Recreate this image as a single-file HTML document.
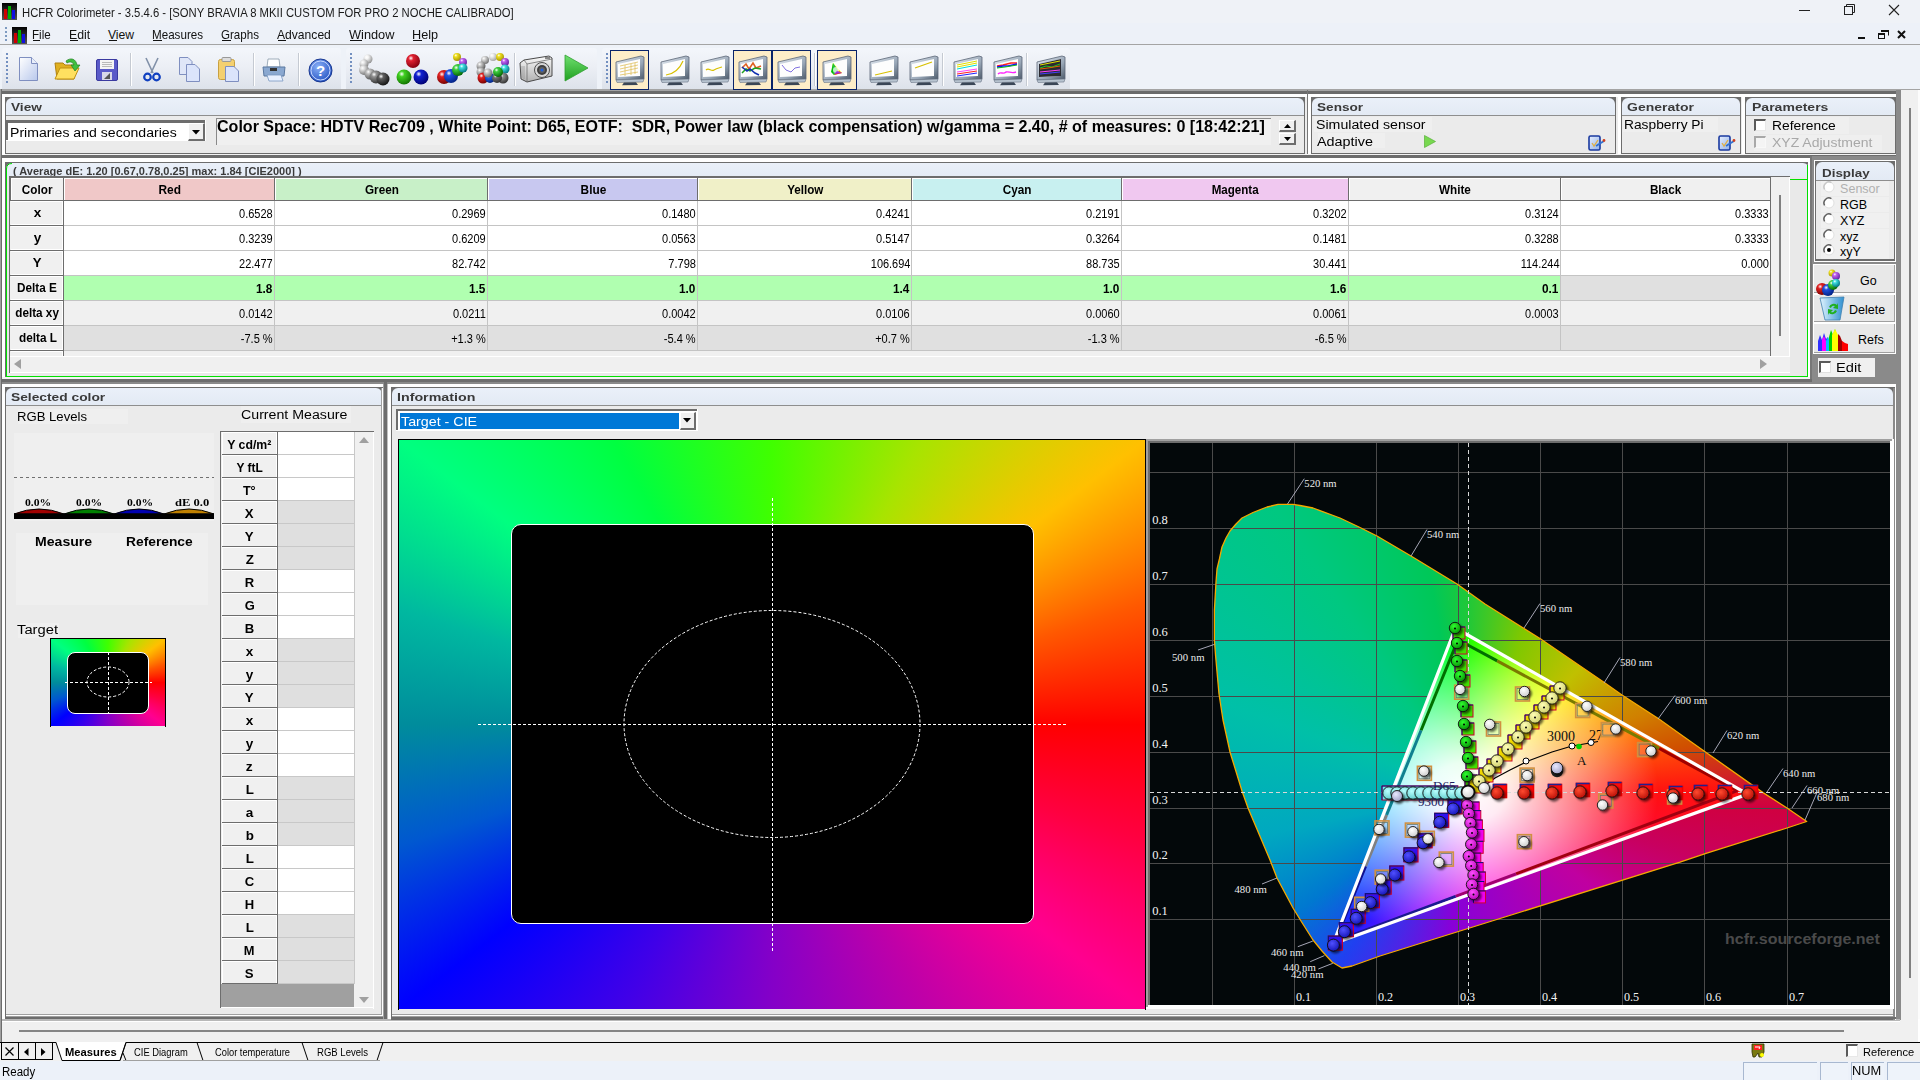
<!DOCTYPE html><html><head><meta charset="utf-8"><style>
*{margin:0;padding:0;box-sizing:border-box}
html,body{width:1920px;height:1080px;overflow:hidden;background:#f0f0f0;font-family:"Liberation Sans",sans-serif;color:#000}
div{position:absolute}
.t{white-space:pre;line-height:1}
.hdr{font-weight:bold;color:#3c3c3c;font-size:13px}
</style></head><body><div style="left:0px;top:0px;width:1920px;height:23px;background:#eff2f7"></div><svg style="position:absolute;left:2px;top:3px" width="15" height="17" viewBox="0 0 15 17">
<defs><linearGradient id="ibg2" x1="0" y1="0" x2="0" y2="1"><stop offset="0" stop-color="#000"/><stop offset="1" stop-color="#555"/></linearGradient></defs>
<rect x="0" y="0" width="15" height="17" fill="url(#ibg2)"/>
<rect x="2" y="6" width="3" height="10" fill="#d00000"/><rect x="6" y="3" width="3" height="13" fill="#00b000"/><rect x="10" y="7" width="3" height="9" fill="#1010e0"/></svg><div class="t" style="left:22.10px;top:6.77px;font-size:12.2px;color:#1a1a1a;transform:scaleX(0.9249);transform-origin:0 0;">HCFR Colorimeter - 3.5.4.6 - [SONY BRAVIA 8 MKII CUSTOM FOR PRO 2 NOCHE CALIBRADO]</div><svg style="position:absolute;left:1790px;top:0" width="130" height="23"><line x1="9" y1="10.5" x2="20" y2="10.5" stroke="#222" stroke-width="1"/><rect x="54.5" y="6.5" width="8" height="8" fill="none" stroke="#222"/><path d="M56.5 6.5 V4.5 H64.5 V12.5 H62.5" fill="none" stroke="#222"/><path d="M99 5 L109 15 M109 5 L99 15" stroke="#222" stroke-width="1.1"/></svg><div style="left:0px;top:23px;width:1920px;height:22px;background:#edf1f8"></div><div style="left:0px;top:44px;width:1920px;height:1px;background:#a4a4a4"></div><div style="left:5px;top:27px;width:2px;height:14px;background:repeating-linear-gradient(#7d9ac0 0 2px,transparent 2px 4px)"></div><svg style="position:absolute;left:12px;top:27px" width="15" height="17" viewBox="0 0 15 17">
<defs><linearGradient id="ibg12" x1="0" y1="0" x2="0" y2="1"><stop offset="0" stop-color="#000"/><stop offset="1" stop-color="#555"/></linearGradient></defs>
<rect x="0" y="0" width="15" height="17" fill="url(#ibg12)"/>
<rect x="2" y="6" width="3" height="10" fill="#d00000"/><rect x="6" y="3" width="3" height="13" fill="#00b000"/><rect x="10" y="7" width="3" height="9" fill="#1010e0"/></svg><div class="t" style="left:32.40px;top:29.27px;font-size:12.2px;color:#111;transform:scaleX(0.9512);transform-origin:0 0;">File</div><div style="left:33.3px;top:40px;width:7px;height:1px;background:#111"></div><div class="t" style="left:69.10px;top:29.27px;font-size:12.2px;color:#111;transform:scaleX(1.0084);transform-origin:0 0;">Edit</div><div style="left:70px;top:40px;width:8px;height:1px;background:#111"></div><div class="t" style="left:107.90px;top:29.27px;font-size:12.2px;color:#111;">View</div><div style="left:108.8px;top:40px;width:8px;height:1px;background:#111"></div><div class="t" style="left:152.10px;top:29.27px;font-size:12.2px;color:#111;transform:scaleX(0.9539);transform-origin:0 0;">Measures</div><div style="left:153px;top:40px;width:9px;height:1px;background:#111"></div><div class="t" style="left:221.30px;top:29.27px;font-size:12.2px;color:#111;transform:scaleX(0.9498);transform-origin:0 0;">Graphs</div><div style="left:222.2px;top:40px;width:9px;height:1px;background:#111"></div><div class="t" style="left:277.00px;top:29.27px;font-size:12.2px;color:#111;transform:scaleX(0.9933);transform-origin:0 0;">Advanced</div><div style="left:277.9px;top:40px;width:8px;height:1px;background:#111"></div><div class="t" style="left:348.80px;top:29.27px;font-size:12.2px;color:#111;transform:scaleX(1.0486);transform-origin:0 0;">Window</div><div style="left:349.7px;top:40px;width:12px;height:1px;background:#111"></div><div class="t" style="left:411.70px;top:29.27px;font-size:12.2px;color:#111;transform:scaleX(1.0402);transform-origin:0 0;">Help</div><div style="left:412.6px;top:40px;width:9px;height:1px;background:#111"></div><svg style="position:absolute;left:1855px;top:26" width="60" height="16"><rect x="3" y="11" width="7" height="2" fill="#111"/><rect x="23.5" y="7.5" width="6" height="5" fill="none" stroke="#111" stroke-width="1"/><rect x="23" y="7" width="7" height="2" fill="#111"/><path d="M26.5 4.5 H33.5 V9.5" fill="none" stroke="#111"/><rect x="26" y="4" width="8" height="2" fill="#111"/><path d="M43 5 L50 12 M50 5 L43 12" stroke="#111" stroke-width="2"/></svg><div style="left:0px;top:45px;width:1920px;height:44px;background:#eef2f8"></div><div style="left:2px;top:48px;width:339px;height:41px;background:linear-gradient(#f3f6fb 0%,#eceff5 45%,#dde2ea 100%);border-radius:3px 3px 0 0"></div><div style="left:6px;top:53px;width:2px;height:32px;background:repeating-linear-gradient(#7390c0 0 2px,transparent 2px 4px)"></div><div style="left:346px;top:48px;width:251px;height:41px;background:linear-gradient(#f3f6fb 0%,#eceff5 45%,#dde2ea 100%);border-radius:3px 3px 0 0"></div><div style="left:350px;top:53px;width:2px;height:32px;background:repeating-linear-gradient(#7390c0 0 2px,transparent 2px 4px)"></div><div style="left:602px;top:48px;width:468px;height:41px;background:linear-gradient(#f3f6fb 0%,#eceff5 45%,#dde2ea 100%);border-radius:3px 3px 0 0"></div><div style="left:606px;top:53px;width:2px;height:32px;background:repeating-linear-gradient(#7390c0 0 2px,transparent 2px 4px)"></div><div style="left:130px;top:53px;width:1px;height:33px;background:#c5cad2;box-shadow:1px 0 0 #fff"></div><div style="left:253px;top:53px;width:1px;height:33px;background:#c5cad2;box-shadow:1px 0 0 #fff"></div><div style="left:298px;top:53px;width:1px;height:33px;background:#c5cad2;box-shadow:1px 0 0 #fff"></div><div style="left:514px;top:53px;width:1px;height:33px;background:#c5cad2;box-shadow:1px 0 0 #fff"></div><div style="left:814px;top:53px;width:1px;height:33px;background:#c5cad2;box-shadow:1px 0 0 #fff"></div><div style="left:942px;top:53px;width:1px;height:33px;background:#c5cad2;box-shadow:1px 0 0 #fff"></div><div style="left:1026px;top:53px;width:1px;height:33px;background:#c5cad2;box-shadow:1px 0 0 #fff"></div><div style="left:0px;top:89px;width:1920px;height:2px;background:#a4a4a4"></div><div style="left:0px;top:91px;width:1920px;height:3px;background:#6b6b6b"></div><div style="left:0px;top:94px;width:1920px;height:3px;background:#fff"></div><svg style="position:absolute;left:19px;top:57px;overflow:visible" width="20" height="24" viewBox="0 0 20 24"><linearGradient id="pg" x1="0" y1="0" x2="1" y2="1"><stop offset="0" stop-color="#fff"/><stop offset="1" stop-color="#b8c8ec"/></linearGradient><path d="M0.5 0.5 H12.5 L18.5 6.5 V23.5 H0.5 Z" fill="url(#pg)" stroke="#7f8fc0"/><path d="M12.5 0.5 V6.5 H18.5" fill="#e8eefa" stroke="#7f8fc0"/></svg><svg style="position:absolute;left:54px;top:57px;overflow:visible" width="26" height="24" viewBox="0 0 26 24"><path d="M1 6 H9 L11 8 H20 V22 H3 Z" fill="#e0b020" stroke="#b08010"/><path d="M1 22 L6 11 H25 L20 22 Z" fill="#ffe060" stroke="#c09010"/><path d="M12 4 C17 0 22 2 23 8 L26 8 L21 14 L17 8 L20 8 C19 5 16 4 13 6 Z" fill="#40c040" stroke="#208020" stroke-width="0.7"/></svg><svg style="position:absolute;left:96px;top:59px;overflow:visible" width="22" height="22" viewBox="0 0 22 22"><rect x="0.5" y="0.5" width="21" height="21" rx="1.5" fill="#5a5ac8" stroke="#3a3aa0"/><rect x="4" y="1" width="14" height="9" fill="#f4f4f4"/><path d="M6 3.5 H16 M6 5.5 H16 M6 7.5 H16" stroke="#aaa" stroke-width="0.8"/><rect x="6" y="13" width="10" height="8" fill="#d8d8e8"/><path d="M8 20 L14 14 L14 20 Z" fill="#555"/></svg><svg style="position:absolute;left:143px;top:58px;overflow:visible" width="18" height="24" viewBox="0 0 18 24"><path d="M3 0 L10 15 M15 0 L8 15" stroke="#8090a8" stroke-width="1.6"/><circle cx="4.5" cy="19" r="3.3" fill="none" stroke="#1040c0" stroke-width="2.2"/><circle cx="13.5" cy="19" r="3.3" fill="none" stroke="#1040c0" stroke-width="2.2"/></svg><svg style="position:absolute;left:179px;top:57px;overflow:visible" width="22" height="25" viewBox="0 0 22 25"><path d="M0.5 0.5 H9 L13 4.5 V17.5 H0.5 Z" fill="#dfe6f8" stroke="#7f8fc0"/><path d="M7.5 7.5 H16 L20.5 12 V24.5 H7.5 Z" fill="#dbe4fb" stroke="#7f8fc0"/></svg><svg style="position:absolute;left:218px;top:57px;overflow:visible" width="22" height="25" viewBox="0 0 22 25"><rect x="0.5" y="2.5" width="16" height="20" rx="2" fill="#f4d070" stroke="#c8a040"/><rect x="4" y="0.5" width="9" height="4" rx="1" fill="#ddd" stroke="#999"/><path d="M7.5 9.5 H16 L20.5 14 V24.5 H7.5 Z" fill="#dbe4fb" stroke="#7f8fc0"/></svg><svg style="position:absolute;left:262px;top:58px;overflow:visible" width="24" height="24" viewBox="0 0 24 24"><path d="M6 1 H17 L18 9 H5 Z" fill="#fff" stroke="#8899aa" stroke-width="0.8"/><path d="M1 9 H23 L22 18 H2 Z" fill="#8aa8d0" stroke="#5a78a0"/><rect x="8" y="10" width="7" height="3" fill="#333"/><path d="M5 17 H19 L21 23 H7 Z" fill="#e8f0ff" stroke="#7898c0" stroke-width="0.8"/></svg><svg style="position:absolute;left:308px;top:58px;overflow:visible" width="25" height="25" viewBox="0 0 25 25"><radialGradient id="hg" cx="0.4" cy="0.35" r="0.7"><stop offset="0" stop-color="#8ab0f8"/><stop offset="1" stop-color="#2050c0"/></radialGradient><circle cx="12.5" cy="12.5" r="11.5" fill="url(#hg)" stroke="#1a3890" stroke-width="1"/><circle cx="12.5" cy="12.5" r="9.5" fill="none" stroke="#c8d8ff" stroke-width="1"/><text x="12.5" y="18" text-anchor="middle" font-family="Liberation Sans" font-weight="bold" font-size="15" fill="#fff">?</text></svg><svg style="position:absolute;left:357px;top:53px;overflow:visible" width="34" height="33" viewBox="0 0 34 33"><radialGradient id="b44865" cx="0.35" cy="0.3" r="0.75"><stop offset="0" stop-color="#fff"/><stop offset="0.25" stop-color="#f4f4f4"/><stop offset="1" stop-color="#909090"/></radialGradient><circle cx="11" cy="6" r="4.5" fill="url(#b44865)"/><radialGradient id="b19548" cx="0.35" cy="0.3" r="0.75"><stop offset="0" stop-color="#fff"/><stop offset="0.25" stop-color="#e8e8e8"/><stop offset="1" stop-color="#808080"/></radialGradient><circle cx="7" cy="11" r="4.5" fill="url(#b19548)"/><radialGradient id="b48007" cx="0.35" cy="0.3" r="0.75"><stop offset="0" stop-color="#fff"/><stop offset="0.25" stop-color="#e0e0e0"/><stop offset="1" stop-color="#707070"/></radialGradient><circle cx="7" cy="17" r="5" fill="url(#b48007)"/><radialGradient id="b12503" cx="0.35" cy="0.3" r="0.75"><stop offset="0" stop-color="#fff"/><stop offset="0.25" stop-color="#c0c0c0"/><stop offset="1" stop-color="#505050"/></radialGradient><circle cx="13" cy="21" r="5.5" fill="url(#b12503)"/><radialGradient id="b9752" cx="0.35" cy="0.3" r="0.75"><stop offset="0" stop-color="#fff"/><stop offset="0.25" stop-color="#909090"/><stop offset="1" stop-color="#303030"/></radialGradient><circle cx="19" cy="24" r="6.5" fill="url(#b9752)"/><radialGradient id="b2339" cx="0.35" cy="0.3" r="0.75"><stop offset="0" stop-color="#fff"/><stop offset="0.25" stop-color="#606060"/><stop offset="1" stop-color="#101010"/></radialGradient><circle cx="26" cy="26" r="6.5" fill="url(#b2339)"/></svg><svg style="position:absolute;left:396px;top:53px;overflow:visible" width="34" height="33" viewBox="0 0 34 33"><radialGradient id="b47967" cx="0.35" cy="0.3" r="0.75"><stop offset="0" stop-color="#fff"/><stop offset="0.25" stop-color="#e02030"/><stop offset="1" stop-color="#800010"/></radialGradient><circle cx="17" cy="8" r="7" fill="url(#b47967)"/><radialGradient id="b72620" cx="0.35" cy="0.3" r="0.75"><stop offset="0" stop-color="#fff"/><stop offset="0.25" stop-color="#40d020"/><stop offset="1" stop-color="#107000"/></radialGradient><circle cx="8" cy="24" r="7.5" fill="url(#b72620)"/><radialGradient id="b6408" cx="0.35" cy="0.3" r="0.75"><stop offset="0" stop-color="#fff"/><stop offset="0.25" stop-color="#1020d0"/><stop offset="1" stop-color="#000070"/></radialGradient><circle cx="25" cy="24" r="7.5" fill="url(#b6408)"/></svg><svg style="position:absolute;left:436px;top:53px;overflow:visible" width="34" height="33" viewBox="0 0 34 33"><radialGradient id="b19639" cx="0.35" cy="0.3" r="0.75"><stop offset="0" stop-color="#fff"/><stop offset="0.25" stop-color="#f0e020"/><stop offset="1" stop-color="#a09000"/></radialGradient><circle cx="21" cy="4" r="4" fill="url(#b19639)"/><radialGradient id="b74729" cx="0.35" cy="0.3" r="0.75"><stop offset="0" stop-color="#fff"/><stop offset="0.25" stop-color="#c060f0"/><stop offset="1" stop-color="#6020a0"/></radialGradient><circle cx="27" cy="9" r="4" fill="url(#b74729)"/><radialGradient id="b22731" cx="0.35" cy="0.3" r="0.75"><stop offset="0" stop-color="#fff"/><stop offset="0.25" stop-color="#e02020"/><stop offset="1" stop-color="#700000"/></radialGradient><circle cx="8" cy="24" r="7" fill="url(#b22731)"/><radialGradient id="b90231" cx="0.35" cy="0.3" r="0.75"><stop offset="0" stop-color="#fff"/><stop offset="0.25" stop-color="#2050e0"/><stop offset="1" stop-color="#002080"/></radialGradient><circle cx="15" cy="23" r="7" fill="url(#b90231)"/><radialGradient id="b73748" cx="0.35" cy="0.3" r="0.75"><stop offset="0" stop-color="#fff"/><stop offset="0.25" stop-color="#40d040"/><stop offset="1" stop-color="#006000"/></radialGradient><circle cx="22" cy="17" r="6" fill="url(#b73748)"/><radialGradient id="b52418" cx="0.35" cy="0.3" r="0.75"><stop offset="0" stop-color="#fff"/><stop offset="0.25" stop-color="#40e0e0"/><stop offset="1" stop-color="#007080"/></radialGradient><circle cx="27" cy="15" r="4.5" fill="url(#b52418)"/></svg><svg style="position:absolute;left:475px;top:53px;overflow:visible" width="34" height="33" viewBox="0 0 34 33"><radialGradient id="b12993" cx="0.35" cy="0.3" r="0.75"><stop offset="0" stop-color="#fff"/><stop offset="0.25" stop-color="#d8d8d8"/><stop offset="1" stop-color="#707070"/></radialGradient><circle cx="10" cy="7" r="4" fill="url(#b12993)"/><radialGradient id="b6859" cx="0.35" cy="0.3" r="0.75"><stop offset="0" stop-color="#fff"/><stop offset="0.25" stop-color="#f0f0f0"/><stop offset="1" stop-color="#a0a0a0"/></radialGradient><circle cx="18" cy="4" r="4" fill="url(#b6859)"/><radialGradient id="b94197" cx="0.35" cy="0.3" r="0.75"><stop offset="0" stop-color="#fff"/><stop offset="0.25" stop-color="#f0e020"/><stop offset="1" stop-color="#a09000"/></radialGradient><circle cx="25" cy="4" r="4" fill="url(#b94197)"/><radialGradient id="b14159" cx="0.35" cy="0.3" r="0.75"><stop offset="0" stop-color="#fff"/><stop offset="0.25" stop-color="#c060f0"/><stop offset="1" stop-color="#6020a0"/></radialGradient><circle cx="30" cy="9" r="4" fill="url(#b14159)"/><radialGradient id="b94847" cx="0.35" cy="0.3" r="0.75"><stop offset="0" stop-color="#fff"/><stop offset="0.25" stop-color="#c8c8c8"/><stop offset="1" stop-color="#505050"/></radialGradient><circle cx="6" cy="13" r="4.5" fill="url(#b94847)"/><radialGradient id="b3373" cx="0.35" cy="0.3" r="0.75"><stop offset="0" stop-color="#fff"/><stop offset="0.25" stop-color="#c8c8c8"/><stop offset="1" stop-color="#505050"/></radialGradient><circle cx="6" cy="19" r="4.5" fill="url(#b3373)"/><radialGradient id="b78454" cx="0.35" cy="0.3" r="0.75"><stop offset="0" stop-color="#fff"/><stop offset="0.25" stop-color="#40e0e0"/><stop offset="1" stop-color="#007080"/></radialGradient><circle cx="30" cy="16" r="4.5" fill="url(#b78454)"/><radialGradient id="b25588" cx="0.35" cy="0.3" r="0.75"><stop offset="0" stop-color="#fff"/><stop offset="0.25" stop-color="#e02020"/><stop offset="1" stop-color="#700000"/></radialGradient><circle cx="8" cy="25" r="5.5" fill="url(#b25588)"/><radialGradient id="b92629" cx="0.35" cy="0.3" r="0.75"><stop offset="0" stop-color="#fff"/><stop offset="0.25" stop-color="#2060e0"/><stop offset="1" stop-color="#002080"/></radialGradient><circle cx="15" cy="25" r="5" fill="url(#b92629)"/><radialGradient id="b66658" cx="0.35" cy="0.3" r="0.75"><stop offset="0" stop-color="#fff"/><stop offset="0.25" stop-color="#909090"/><stop offset="1" stop-color="#303030"/></radialGradient><circle cx="28" cy="25" r="5.5" fill="url(#b66658)"/><radialGradient id="b1511" cx="0.35" cy="0.3" r="0.75"><stop offset="0" stop-color="#fff"/><stop offset="0.25" stop-color="#707070"/><stop offset="1" stop-color="#303030"/></radialGradient><circle cx="22" cy="25" r="5" fill="url(#b1511)"/><radialGradient id="b39415" cx="0.35" cy="0.3" r="0.75"><stop offset="0" stop-color="#fff"/><stop offset="0.25" stop-color="#d0d0d0"/><stop offset="1" stop-color="#606060"/></radialGradient><circle cx="13" cy="20" r="4.5" fill="url(#b39415)"/><radialGradient id="b7552" cx="0.35" cy="0.3" r="0.75"><stop offset="0" stop-color="#fff"/><stop offset="0.25" stop-color="#40d040"/><stop offset="1" stop-color="#006000"/></radialGradient><circle cx="23" cy="19" r="5" fill="url(#b7552)"/></svg><svg style="position:absolute;left:519px;top:54px;overflow:visible" width="34" height="30" viewBox="0 0 34 30"><linearGradient id="cam" x1="0" y1="0" x2="0" y2="1"><stop offset="0" stop-color="#fafafa"/><stop offset="1" stop-color="#b0b0b0"/></linearGradient><path d="M1 9 L5 6 L30 2 L33 4 L33 22 L8 28 L2 25 Z" fill="url(#cam)" stroke="#4a4a4a" stroke-width="1"/><path d="M5 6 L8 10 L33 5 M8 10 V28" fill="none" stroke="#707070" stroke-width="0.8"/><path d="M3 12 V24 M5 12 V25" stroke="#909090" stroke-width="0.7"/><rect x="26" y="3" width="5" height="2" fill="#888"/><circle cx="23" cy="16" r="7.5" fill="#d8d8d8" stroke="#505050" stroke-width="1"/><circle cx="23" cy="16" r="5" fill="#404040"/><circle cx="23" cy="16" r="3" fill="#606060"/><circle cx="23" cy="16" r="1.5" fill="#2060e0"/></svg><svg style="position:absolute;left:563px;top:54px;overflow:visible" width="26" height="28" viewBox="0 0 26 28"><linearGradient id="pl" x1="0" y1="0" x2="0" y2="1"><stop offset="0" stop-color="#70e070"/><stop offset="1" stop-color="#20a020"/></linearGradient><path d="M2 1 L25 14 L2 27 Z" fill="url(#pl)" stroke="#30a030" stroke-width="0.8"/></svg><div style="left:610px;top:50px;width:39px;height:40px;background:#fdedc8;border:1px solid #0a246a"></div><svg style="position:absolute;left:613px;top:54px;overflow:visible" width="34" height="32" viewBox="0 0 34 32"><linearGradient id="mframe" x1="0" y1="0" x2="1" y2="1"><stop offset="0" stop-color="#e8eef5"/><stop offset="0.6" stop-color="#9aa8b8"/><stop offset="1" stop-color="#4a5868"/></linearGradient><path d="M3 8 L28 2 L31 3 L31 25 L3 26 Z" fill="url(#mframe)" stroke="#5a6676" stroke-width="0.8"/><path d="M5 10 L27 5 L27 22 L5 23 Z" fill="#fdfdfd"/><g stroke="#e0c060" stroke-width="0.8"><path d="M7 12 L25 8 M7 15 L25 11 M7 18 L25 14 M7 21 L25 18 M12 11 V22 M18 10 V21 M22 9 V20"/></g><path d="M3 26 L31 25 L30 28 L4 28.5 Z" fill="#b8c4d0" stroke="#6a7686" stroke-width="0.6"/><path d="M11 28.5 L23 28.3 L25 31 L9 31.2 Z" fill="#3a4656"/></svg><svg style="position:absolute;left:658px;top:54px;overflow:visible" width="34" height="32" viewBox="0 0 34 32"><linearGradient id="mframe" x1="0" y1="0" x2="1" y2="1"><stop offset="0" stop-color="#e8eef5"/><stop offset="0.6" stop-color="#9aa8b8"/><stop offset="1" stop-color="#4a5868"/></linearGradient><path d="M3 8 L28 2 L31 3 L31 25 L3 26 Z" fill="url(#mframe)" stroke="#5a6676" stroke-width="0.8"/><path d="M5 10 L27 5 L27 22 L5 23 Z" fill="#fdfdfd"/><path d="M8 21 C16 20 22 14 25 7" fill="none" stroke="#d8c000" stroke-width="1.2"/><path d="M3 26 L31 25 L30 28 L4 28.5 Z" fill="#b8c4d0" stroke="#6a7686" stroke-width="0.6"/><path d="M11 28.5 L23 28.3 L25 31 L9 31.2 Z" fill="#3a4656"/></svg><svg style="position:absolute;left:698px;top:54px;overflow:visible" width="34" height="32" viewBox="0 0 34 32"><linearGradient id="mframe" x1="0" y1="0" x2="1" y2="1"><stop offset="0" stop-color="#e8eef5"/><stop offset="0.6" stop-color="#9aa8b8"/><stop offset="1" stop-color="#4a5868"/></linearGradient><path d="M3 8 L28 2 L31 3 L31 25 L3 26 Z" fill="url(#mframe)" stroke="#5a6676" stroke-width="0.8"/><path d="M5 10 L27 5 L27 22 L5 23 Z" fill="#fdfdfd"/><path d="M8 16 C11 13 13 18 16 16 C19 14 21 14 24 13" fill="none" stroke="#d8c000" stroke-width="1.2"/><path d="M3 26 L31 25 L30 28 L4 28.5 Z" fill="#b8c4d0" stroke="#6a7686" stroke-width="0.6"/><path d="M11 28.5 L23 28.3 L25 31 L9 31.2 Z" fill="#3a4656"/></svg><div style="left:733px;top:50px;width:39px;height:40px;background:#fdedc8;border:1px solid #0a246a"></div><svg style="position:absolute;left:736px;top:54px;overflow:visible" width="34" height="32" viewBox="0 0 34 32"><linearGradient id="mframe" x1="0" y1="0" x2="1" y2="1"><stop offset="0" stop-color="#e8eef5"/><stop offset="0.6" stop-color="#9aa8b8"/><stop offset="1" stop-color="#4a5868"/></linearGradient><path d="M3 8 L28 2 L31 3 L31 25 L3 26 Z" fill="url(#mframe)" stroke="#5a6676" stroke-width="0.8"/><path d="M5 10 L27 5 L27 22 L5 23 Z" fill="#fdfdfd"/><path d="M6 14 L10 10 L13 15 L17 9 L20 14 L25 12" fill="none" stroke="#e06020" stroke-width="1.5"/><path d="M6 19 L10 15 L14 17 L19 14 L25 15" fill="none" stroke="#20a020" stroke-width="1.5"/><path d="M6 13 L11 17 L14 15 L19 19 L23 21" fill="none" stroke="#1030b0" stroke-width="1.5"/><path d="M3 26 L31 25 L30 28 L4 28.5 Z" fill="#b8c4d0" stroke="#6a7686" stroke-width="0.6"/><path d="M11 28.5 L23 28.3 L25 31 L9 31.2 Z" fill="#3a4656"/></svg><div style="left:772px;top:50px;width:39px;height:40px;background:#fdedc8;border:1px solid #0a246a"></div><svg style="position:absolute;left:775px;top:54px;overflow:visible" width="34" height="32" viewBox="0 0 34 32"><linearGradient id="mframe" x1="0" y1="0" x2="1" y2="1"><stop offset="0" stop-color="#e8eef5"/><stop offset="0.6" stop-color="#9aa8b8"/><stop offset="1" stop-color="#4a5868"/></linearGradient><path d="M3 8 L28 2 L31 3 L31 25 L3 26 Z" fill="url(#mframe)" stroke="#5a6676" stroke-width="0.8"/><path d="M5 10 L27 5 L27 22 L5 23 Z" fill="#fdfdfd"/><path d="M7 11 L11 16 L16 18 L20 14 L25 13" fill="none" stroke="#8070e0" stroke-width="1"/><path d="M3 26 L31 25 L30 28 L4 28.5 Z" fill="#b8c4d0" stroke="#6a7686" stroke-width="0.6"/><path d="M11 28.5 L23 28.3 L25 31 L9 31.2 Z" fill="#3a4656"/></svg><div style="left:817px;top:50px;width:40px;height:40px;background:#fdedc8;border:1px solid #0a246a"></div><svg style="position:absolute;left:820px;top:54px;overflow:visible" width="34" height="32" viewBox="0 0 34 32"><linearGradient id="mframe" x1="0" y1="0" x2="1" y2="1"><stop offset="0" stop-color="#e8eef5"/><stop offset="0.6" stop-color="#9aa8b8"/><stop offset="1" stop-color="#4a5868"/></linearGradient><path d="M3 8 L28 2 L31 3 L31 25 L3 26 Z" fill="url(#mframe)" stroke="#5a6676" stroke-width="0.8"/><path d="M5 10 L27 5 L27 22 L5 23 Z" fill="#fdfdfd"/><path d="M13 9 L22 19 L14 21 C12 17 12 13 13 9 Z" fill="#ffff00"/><path d="M13 9 L14 21 L11 18 Z" fill="#00c000"/><path d="M14 21 L22 19 L17 16 Z" fill="#e02020"/><path d="M13 9 C13 13 12 17 14 21 L18 16 Z" fill="#20c040"/><circle cx="16" cy="16" r="3" fill="#fff" opacity="0.7"/><path d="M14 20 L22 19 L17 17 Z" fill="#a030e0"/><path d="M3 26 L31 25 L30 28 L4 28.5 Z" fill="#b8c4d0" stroke="#6a7686" stroke-width="0.6"/><path d="M11 28.5 L23 28.3 L25 31 L9 31.2 Z" fill="#3a4656"/></svg><svg style="position:absolute;left:867px;top:54px;overflow:visible" width="34" height="32" viewBox="0 0 34 32"><linearGradient id="mframe" x1="0" y1="0" x2="1" y2="1"><stop offset="0" stop-color="#e8eef5"/><stop offset="0.6" stop-color="#9aa8b8"/><stop offset="1" stop-color="#4a5868"/></linearGradient><path d="M3 8 L28 2 L31 3 L31 25 L3 26 Z" fill="url(#mframe)" stroke="#5a6676" stroke-width="0.8"/><path d="M5 10 L27 5 L27 22 L5 23 Z" fill="#fdfdfd"/><path d="M8 21 L25 17" fill="none" stroke="#d8c000" stroke-width="1.2"/><path d="M3 26 L31 25 L30 28 L4 28.5 Z" fill="#b8c4d0" stroke="#6a7686" stroke-width="0.6"/><path d="M11 28.5 L23 28.3 L25 31 L9 31.2 Z" fill="#3a4656"/></svg><svg style="position:absolute;left:907px;top:54px;overflow:visible" width="34" height="32" viewBox="0 0 34 32"><linearGradient id="mframe" x1="0" y1="0" x2="1" y2="1"><stop offset="0" stop-color="#e8eef5"/><stop offset="0.6" stop-color="#9aa8b8"/><stop offset="1" stop-color="#4a5868"/></linearGradient><path d="M3 8 L28 2 L31 3 L31 25 L3 26 Z" fill="url(#mframe)" stroke="#5a6676" stroke-width="0.8"/><path d="M5 10 L27 5 L27 22 L5 23 Z" fill="#fdfdfd"/><path d="M8 14 L25 8" fill="none" stroke="#d8c000" stroke-width="1.2"/><path d="M3 26 L31 25 L30 28 L4 28.5 Z" fill="#b8c4d0" stroke="#6a7686" stroke-width="0.6"/><path d="M11 28.5 L23 28.3 L25 31 L9 31.2 Z" fill="#3a4656"/></svg><svg style="position:absolute;left:951px;top:54px;overflow:visible" width="34" height="32" viewBox="0 0 34 32"><linearGradient id="mframe" x1="0" y1="0" x2="1" y2="1"><stop offset="0" stop-color="#e8eef5"/><stop offset="0.6" stop-color="#9aa8b8"/><stop offset="1" stop-color="#4a5868"/></linearGradient><path d="M3 8 L28 2 L31 3 L31 25 L3 26 Z" fill="url(#mframe)" stroke="#5a6676" stroke-width="0.8"/><path d="M5 10 L27 5 L27 22 L5 23 Z" fill="#fdfdfd"/><path d="M6 11 L26 7 M6 13 L26 9" stroke="#e0e000" stroke-width="1"/><path d="M6 15 L26 11" stroke="#00e0e0" stroke-width="1"/><path d="M6 18 L26 15" stroke="#ff40ff" stroke-width="1"/><path d="M6 20 L26 17" stroke="#ff2020" stroke-width="1"/><path d="M6 22 L26 19" stroke="#2020ff" stroke-width="1"/><path d="M3 26 L31 25 L30 28 L4 28.5 Z" fill="#b8c4d0" stroke="#6a7686" stroke-width="0.6"/><path d="M11 28.5 L23 28.3 L25 31 L9 31.2 Z" fill="#3a4656"/></svg><svg style="position:absolute;left:991px;top:54px;overflow:visible" width="34" height="32" viewBox="0 0 34 32"><linearGradient id="mframe" x1="0" y1="0" x2="1" y2="1"><stop offset="0" stop-color="#e8eef5"/><stop offset="0.6" stop-color="#9aa8b8"/><stop offset="1" stop-color="#4a5868"/></linearGradient><path d="M3 8 L28 2 L31 3 L31 25 L3 26 Z" fill="url(#mframe)" stroke="#5a6676" stroke-width="0.8"/><path d="M5 10 L27 5 L27 22 L5 23 Z" fill="#fdfdfd"/><path d="M6 12 L12 11 L16 10 L20 9 L26 9" stroke="#ff2020" stroke-width="1.6" fill="none"/><path d="M6 13 L12 12 L17 12 L26 10" stroke="#1010ff" stroke-width="1.4" fill="none"/><path d="M6 14 L14 13 L26 11" stroke="#10c010" stroke-width="1.2" fill="none"/><path d="M7 20 C10 17 12 21 15 18 C18 17 20 20 25 18" stroke="#ff20ff" stroke-width="1.4" fill="none"/><path d="M3 26 L31 25 L30 28 L4 28.5 Z" fill="#b8c4d0" stroke="#6a7686" stroke-width="0.6"/><path d="M11 28.5 L23 28.3 L25 31 L9 31.2 Z" fill="#3a4656"/></svg><svg style="position:absolute;left:1034px;top:54px;overflow:visible" width="34" height="32" viewBox="0 0 34 32"><linearGradient id="mframe" x1="0" y1="0" x2="1" y2="1"><stop offset="0" stop-color="#e8eef5"/><stop offset="0.6" stop-color="#9aa8b8"/><stop offset="1" stop-color="#4a5868"/></linearGradient><path d="M3 8 L28 2 L31 3 L31 25 L3 26 Z" fill="url(#mframe)" stroke="#5a6676" stroke-width="0.8"/><path d="M5 10 L27 5 L27 22 L5 23 Z" fill="#fdfdfd"/><path d="M5 10 L27 5 L27 22 L5 23 Z" fill="#2a2a30"/><path d="M6 11 L26 7" stroke="#e0e000" stroke-width="1"/><path d="M6 14 L12 12 L18 13 L26 10" stroke="#20c020" stroke-width="1" fill="none"/><path d="M6 15 L14 14 L26 12" stroke="#e06000" stroke-width="1" fill="none"/><path d="M6 18 L26 16" stroke="#ff40ff" stroke-width="1"/><path d="M6 20 L26 18" stroke="#4040ff" stroke-width="1"/><path d="M3 26 L31 25 L30 28 L4 28.5 Z" fill="#b8c4d0" stroke="#6a7686" stroke-width="0.6"/><path d="M11 28.5 L23 28.3 L25 31 L9 31.2 Z" fill="#3a4656"/></svg><div style="left:0px;top:89px;width:1px;height:990px;background:#a0a0a0"></div><div style="left:1px;top:89px;width:1px;height:990px;background:#6d6d6d"></div><div style="left:2px;top:97px;width:3px;height:923px;background:#fff"></div><div style="left:5px;top:97px;width:1300px;height:57px;background:#6d6d6d"></div><div style="left:6px;top:98px;width:1298px;height:17px;background:linear-gradient(#eaf0f9,#e3eaf4);border-radius:6px 6px 0 0"></div><div style="left:6px;top:115px;width:1298px;height:1px;background:#8e8e8e"></div><div style="left:6px;top:116px;width:1298px;height:37px;background:#ebebeb"></div><div class="t" style="left:11.35px;top:102.29px;font-size:11px;font-weight:bold;color:#3a3a3a;transform:scaleX(1.2405);transform-origin:0 0;">View</div><div style="left:6px;top:120px;width:200px;height:21px;background:#6d6d6d;border-right:1px solid #fff;border-bottom:1px solid #fff"></div><div style="left:8px;top:123px;width:197px;height:17px;background:#fff"></div><div class="t" style="left:10.00px;top:126.92px;font-size:12.5px;color:#000;transform:scaleX(1.1264);transform-origin:0 0;">Primaries and secondaries</div><div style="left:188px;top:123px;width:17px;height:18px;background:#f0f0f0;border-left:1px solid #fff;border-top:1px solid #fff;border-right:2px solid #6d6d6d;border-bottom:2px solid #6d6d6d"></div><svg style="position:absolute;left:192px;top:130px;overflow:visible" width="9" height="5" viewBox="0 0 9 5"><path d="M0 0 L8 0 L4 4.5 Z" fill="#000"/></svg><div style="left:216px;top:118px;width:1055px;height:27px;background:#f0f0f0;border-left:1px solid #8a8a8a;border-top:1px solid #8a8a8a"></div><div class="t" style="left:216.90px;top:119.35px;font-size:16.6px;font-weight:bold;color:#000;transform:scaleX(0.9674);transform-origin:0 0;">Color Space: HDTV Rec709 , White Point: D65, EOTF:  SDR, Power law (black compensation) w/gamma = 2.40, # of measures: 0 [18:42:21]</div><div style="left:1279px;top:120px;width:17px;height:12px;background:#f0f0f0;border-left:1px solid #fff;border-top:1px solid #fff;border-right:2px solid #6d6d6d;border-bottom:2px solid #6d6d6d"></div><div style="left:1279px;top:133px;width:17px;height:12px;background:#f0f0f0;border-left:1px solid #fff;border-top:1px solid #fff;border-right:2px solid #6d6d6d;border-bottom:2px solid #6d6d6d"></div><svg style="position:absolute;left:1284px;top:124px;overflow:visible" width="7" height="4" viewBox="0 0 7 4"><path d="M0 4 L3.5 0 L7 4 Z" fill="#000"/></svg><svg style="position:absolute;left:1284px;top:137px;overflow:visible" width="7" height="4" viewBox="0 0 7 4"><path d="M0 0 L3.5 4 L7 0 Z" fill="#000"/></svg><div style="left:1305px;top:97px;width:2px;height:57px;background:#ececec"></div><div style="left:1307px;top:90px;width:1px;height:66px;background:#777"></div><div style="left:1308px;top:97px;width:3px;height:57px;background:#fff"></div><div style="left:1311px;top:97px;width:305px;height:57px;background:#6d6d6d"></div><div style="left:1312px;top:98px;width:303px;height:17px;background:linear-gradient(#eaf0f9,#e3eaf4);border-radius:6px 6px 0 0"></div><div style="left:1312px;top:115px;width:303px;height:1px;background:#8e8e8e"></div><div style="left:1312px;top:116px;width:303px;height:37px;background:#ebebeb"></div><div class="t" style="left:1317.10px;top:102.49px;font-size:11px;font-weight:bold;color:#3a3a3a;transform:scaleX(1.2362);transform-origin:0 0;">Sensor</div><div style="left:1314px;top:117px;width:118px;height:15px;background:#efefef"></div><div class="t" style="left:1315.70px;top:119.02px;font-size:12.5px;color:#000;transform:scaleX(1.1338);transform-origin:0 0;">Simulated sensor</div><div style="left:1318px;top:133px;width:67px;height:15px;background:#efefef"></div><div class="t" style="left:1317.10px;top:136.22px;font-size:12.5px;color:#000;transform:scaleX(1.1491);transform-origin:0 0;">Adaptive</div><svg style="position:absolute;left:1424px;top:135px;overflow:visible" width="12" height="13" viewBox="0 0 12 13"><path d="M0.5 0.5 L11.5 6.5 L0.5 12.5 Z" fill="#78d850" stroke="#58b038" stroke-width="0.7"/></svg><svg style="position:absolute;left:1588px;top:134px;overflow:visible" width="18" height="17" viewBox="0 0 18 17"><linearGradient id="edg" x1="0" y1="0" x2="1" y2="1"><stop offset="0" stop-color="#e8f0ff"/><stop offset="1" stop-color="#90b0e8"/></linearGradient><rect x="1" y="2" width="11" height="14" rx="1.5" fill="url(#edg)" stroke="#1a3aa0" stroke-width="1.6"/><path d="M4 9 L6 12 L10 6" stroke="#e0b040" stroke-width="1.3" fill="none"/><path d="M8 12 L16 7" stroke="#3070d0" stroke-width="1.8"/><circle cx="16" cy="6.5" r="1.4" fill="#d04020"/></svg><div style="left:1616px;top:97px;width:2px;height:57px;background:#ececec"></div><div style="left:1618px;top:97px;width:3px;height:57px;background:#fff"></div><div style="left:1621px;top:97px;width:120px;height:57px;background:#6d6d6d"></div><div style="left:1622px;top:98px;width:118px;height:17px;background:linear-gradient(#eaf0f9,#e3eaf4);border-radius:6px 6px 0 0"></div><div style="left:1622px;top:115px;width:118px;height:1px;background:#8e8e8e"></div><div style="left:1622px;top:116px;width:118px;height:37px;background:#ebebeb"></div><div class="t" style="left:1627.30px;top:102.49px;font-size:11px;font-weight:bold;color:#3a3a3a;transform:scaleX(1.2725);transform-origin:0 0;">Generator</div><div style="left:1623px;top:117px;width:95px;height:15px;background:#efefef"></div><div class="t" style="left:1623.70px;top:119.02px;font-size:12.5px;color:#000;transform:scaleX(1.1017);transform-origin:0 0;">Raspberry Pi</div><svg style="position:absolute;left:1718px;top:134px;overflow:visible" width="18" height="17" viewBox="0 0 18 17"><linearGradient id="edg" x1="0" y1="0" x2="1" y2="1"><stop offset="0" stop-color="#e8f0ff"/><stop offset="1" stop-color="#90b0e8"/></linearGradient><rect x="1" y="2" width="11" height="14" rx="1.5" fill="url(#edg)" stroke="#1a3aa0" stroke-width="1.6"/><path d="M4 9 L6 12 L10 6" stroke="#e0b040" stroke-width="1.3" fill="none"/><path d="M8 12 L16 7" stroke="#3070d0" stroke-width="1.8"/><circle cx="16" cy="6.5" r="1.4" fill="#d04020"/></svg><div style="left:1741px;top:97px;width:1px;height:57px;background:#ececec"></div><div style="left:1742px;top:97px;width:3px;height:57px;background:#fff"></div><div style="left:1745px;top:97px;width:151px;height:57px;background:#6d6d6d"></div><div style="left:1746px;top:98px;width:149px;height:17px;background:linear-gradient(#eaf0f9,#e3eaf4);border-radius:6px 6px 0 0"></div><div style="left:1746px;top:115px;width:149px;height:1px;background:#8e8e8e"></div><div style="left:1746px;top:116px;width:149px;height:37px;background:#ebebeb"></div><div class="t" style="left:1751.60px;top:102.49px;font-size:11px;font-weight:bold;color:#3a3a3a;transform:scaleX(1.2748);transform-origin:0 0;">Parameters</div><div style="left:1754px;top:117px;width:95px;height:17px;background:#efefef"></div><div style="left:1754px;top:135px;width:128px;height:16px;background:#efefef"></div><div style="left:1754px;top:119px;width:12px;height:12px;background:#fff;border-left:2px solid #5a5a5a;border-top:2px solid #5a5a5a;border-right:1px solid #e8e8e8;border-bottom:1px solid #e8e8e8"></div><div class="t" style="left:1772.40px;top:119.92px;font-size:12.5px;color:#000;transform:scaleX(1.1062);transform-origin:0 0;">Reference</div><div style="left:1754px;top:136px;width:12px;height:12px;background:#f4f4f4;border-left:2px solid #a8a8a8;border-top:2px solid #a8a8a8;border-right:1px solid #f8f8f8;border-bottom:1px solid #f8f8f8"></div><div class="t" style="left:1772.40px;top:137.02px;font-size:12.5px;color:#a8a8a8;transform:scaleX(1.1202);transform-origin:0 0;">XYZ Adjustment</div><div style="left:1896px;top:90px;width:5px;height:930px;background:#8a8a8a"></div><div style="left:1901px;top:90px;width:19px;height:953px;background:#f0f0f0"></div><div style="left:1909px;top:108px;width:2px;height:870px;background:#808080"></div><div style="left:1918px;top:90px;width:2px;height:953px;background:#fcfcfc"></div><div style="left:5px;top:154px;width:1891px;height:1px;background:#f4f4f4"></div><div style="left:2px;top:155px;width:1894px;height:3px;background:#6d6d6d"></div><div style="left:5px;top:158px;width:1805px;height:4px;background:#fff"></div><div style="left:5px;top:162px;width:1805px;height:215px;background:#6d6d6d"></div><div style="left:6px;top:163px;width:1803px;height:14px;background:linear-gradient(#eaf0f9,#e4ebf5);border-radius:6px 6px 0 0"></div><div style="left:6px;top:177px;width:1803px;height:199px;background:#e9e9e9"></div><div style="left:6px;top:168px;width:1px;height:209px;background:#00e000"></div><svg style="position:absolute;left:6px;top:163px;overflow:visible" width="6" height="6" viewBox="0 0 6 6"><path d="M0.5 6 Q0.5 0.5 6 0.5" fill="none" stroke="#00e000" stroke-width="1"/></svg><div style="left:6px;top:376px;width:1802px;height:1px;background:#00e000"></div><div style="left:1807px;top:165px;width:1px;height:212px;background:#00e000"></div><div style="left:1790px;top:179px;width:17px;height:1px;background:#00e000"></div><div class="t" style="left:13.30px;top:166.11px;font-size:10.5px;font-weight:bold;color:#3a3a3a;transform:scaleX(1.0487);transform-origin:0 0;">( Average dE: 1.20 [0.67,0.78,0.25] max: 1.84 [CIE2000] )</div><div style="left:9px;top:176px;width:1781px;height:197px;background:#6d6d6d"></div><div style="left:10px;top:177px;width:1780px;height:196px;background:#f0f0f0"></div><div style="left:10px;top:177px;width:1761px;height:24px;background:#6d6d6d"></div><div style="left:11px;top:178px;width:52px;height:22px;background:#fff"></div><div style="left:12px;top:179px;width:51px;height:21px;background:#f0f0f0"></div><div class="t" style="left:21.31px;top:184.10px;font-size:12.4px;font-weight:bold;color:#000;transform:scaleX(0.9471);transform-origin:50% 0;">Color</div><div style="left:64px;top:178px;width:210px;height:22px;background:#fff"></div><div style="left:65px;top:179px;width:209px;height:21px;background:#f0c8c8"></div><div class="t" style="left:157.79px;top:184.10px;font-size:12.4px;font-weight:bold;color:#000;transform:scaleX(0.9612);transform-origin:50% 0;">Red</div><div style="left:275px;top:178px;width:212px;height:22px;background:#fff"></div><div style="left:276px;top:179px;width:211px;height:21px;background:#c8f0c8"></div><div class="t" style="left:363.58px;top:184.10px;font-size:12.4px;font-weight:bold;color:#000;transform:scaleX(0.9435);transform-origin:50% 0;">Green</div><div style="left:488px;top:178px;width:209px;height:22px;background:#fff"></div><div style="left:489px;top:179px;width:208px;height:21px;background:#c8c8f0"></div><div class="t" style="left:579.56px;top:184.10px;font-size:12.4px;font-weight:bold;color:#000;transform:scaleX(0.9547);transform-origin:50% 0;">Blue</div><div style="left:698px;top:178px;width:213px;height:22px;background:#fff"></div><div style="left:699px;top:179px;width:212px;height:21px;background:#f0f0c8"></div><div class="t" style="left:785.70px;top:184.10px;font-size:12.4px;font-weight:bold;color:#000;transform:scaleX(0.9411);transform-origin:50% 0;">Yellow</div><div style="left:912px;top:178px;width:209px;height:22px;background:#fff"></div><div style="left:913px;top:179px;width:208px;height:21px;background:#c8f0f0"></div><div class="t" style="left:1001.84px;top:184.10px;font-size:12.4px;font-weight:bold;color:#000;transform:scaleX(0.9496);transform-origin:50% 0;">Cyan</div><div style="left:1122px;top:178px;width:226px;height:22px;background:#fff"></div><div style="left:1123px;top:179px;width:225px;height:21px;background:#f0c8f0"></div><div class="t" style="left:1210.35px;top:184.10px;font-size:12.4px;font-weight:bold;color:#000;transform:scaleX(0.9339);transform-origin:50% 0;">Magenta</div><div style="left:1349px;top:178px;width:211px;height:22px;background:#fff"></div><div style="left:1350px;top:179px;width:210px;height:21px;background:#f0f0f0"></div><div class="t" style="left:1438.13px;top:184.10px;font-size:12.4px;font-weight:bold;color:#000;transform:scaleX(0.9456);transform-origin:50% 0;">White</div><div style="left:1561px;top:178px;width:209px;height:22px;background:#fff"></div><div style="left:1562px;top:179px;width:208px;height:21px;background:#f0f0f0"></div><div class="t" style="left:1649.46px;top:184.10px;font-size:12.4px;font-weight:bold;color:#000;transform:scaleX(0.9463);transform-origin:50% 0;">Black</div><div style="left:11px;top:201px;width:52px;height:24px;background:#fff"></div><div style="left:11px;top:202px;width:51px;height:22px;background:#f0f0f0"></div><div style="left:10px;top:225px;width:53px;height:1px;background:#6d6d6d"></div><div class="t" style="left:34.05px;top:207.10px;font-size:12.4px;font-weight:bold;color:#000;transform:scaleX(1.0940);transform-origin:50% 0;">x</div><div style="left:64px;top:201px;width:1706px;height:24px;background:#ffffff"></div><div style="left:64px;top:225px;width:1706px;height:1px;background:#c4c4c4"></div><div class="t" style="left:236.30px;top:208.44px;font-size:12px;color:#000;transform:scaleX(0.9177);transform-origin:100% 0;">0.6528</div><div class="t" style="left:449.30px;top:208.44px;font-size:12px;color:#000;transform:scaleX(0.9177);transform-origin:100% 0;">0.2969</div><div class="t" style="left:659.30px;top:208.44px;font-size:12px;color:#000;transform:scaleX(0.9177);transform-origin:100% 0;">0.1480</div><div class="t" style="left:873.30px;top:208.44px;font-size:12px;color:#000;transform:scaleX(0.9177);transform-origin:100% 0;">0.4241</div><div class="t" style="left:1083.30px;top:208.44px;font-size:12px;color:#000;transform:scaleX(0.9177);transform-origin:100% 0;">0.2191</div><div class="t" style="left:1310.30px;top:208.44px;font-size:12px;color:#000;transform:scaleX(0.9177);transform-origin:100% 0;">0.3202</div><div class="t" style="left:1522.30px;top:208.44px;font-size:12px;color:#000;transform:scaleX(0.9177);transform-origin:100% 0;">0.3124</div><div class="t" style="left:1732.30px;top:208.44px;font-size:12px;color:#000;transform:scaleX(0.9177);transform-origin:100% 0;">0.3333</div><div style="left:11px;top:226px;width:52px;height:24px;background:#fff"></div><div style="left:11px;top:227px;width:51px;height:22px;background:#f0f0f0"></div><div style="left:10px;top:250px;width:53px;height:1px;background:#6d6d6d"></div><div class="t" style="left:34.05px;top:232.10px;font-size:12.4px;font-weight:bold;color:#000;transform:scaleX(1.0940);transform-origin:50% 0;">y</div><div style="left:64px;top:226px;width:1706px;height:24px;background:#ffffff"></div><div style="left:64px;top:250px;width:1706px;height:1px;background:#c4c4c4"></div><div class="t" style="left:236.30px;top:233.44px;font-size:12px;color:#000;transform:scaleX(0.9177);transform-origin:100% 0;">0.3239</div><div class="t" style="left:449.30px;top:233.44px;font-size:12px;color:#000;transform:scaleX(0.9177);transform-origin:100% 0;">0.6209</div><div class="t" style="left:659.30px;top:233.44px;font-size:12px;color:#000;transform:scaleX(0.9177);transform-origin:100% 0;">0.0563</div><div class="t" style="left:873.30px;top:233.44px;font-size:12px;color:#000;transform:scaleX(0.9177);transform-origin:100% 0;">0.5147</div><div class="t" style="left:1083.30px;top:233.44px;font-size:12px;color:#000;transform:scaleX(0.9177);transform-origin:100% 0;">0.3264</div><div class="t" style="left:1310.30px;top:233.44px;font-size:12px;color:#000;transform:scaleX(0.9177);transform-origin:100% 0;">0.1481</div><div class="t" style="left:1522.30px;top:233.44px;font-size:12px;color:#000;transform:scaleX(0.9177);transform-origin:100% 0;">0.3288</div><div class="t" style="left:1732.30px;top:233.44px;font-size:12px;color:#000;transform:scaleX(0.9177);transform-origin:100% 0;">0.3333</div><div style="left:11px;top:251px;width:52px;height:24px;background:#fff"></div><div style="left:11px;top:252px;width:51px;height:22px;background:#f0f0f0"></div><div style="left:10px;top:275px;width:53px;height:1px;background:#6d6d6d"></div><div class="t" style="left:33.36px;top:257.10px;font-size:12.4px;font-weight:bold;color:#000;transform:scaleX(1.0651);transform-origin:50% 0;">Y</div><div style="left:64px;top:251px;width:1706px;height:24px;background:#ffffff"></div><div style="left:64px;top:275px;width:1706px;height:1px;background:#c4c4c4"></div><div class="t" style="left:236.30px;top:258.44px;font-size:12px;color:#000;transform:scaleX(0.9177);transform-origin:100% 0;">22.477</div><div class="t" style="left:449.30px;top:258.44px;font-size:12px;color:#000;transform:scaleX(0.9177);transform-origin:100% 0;">82.742</div><div class="t" style="left:665.97px;top:258.44px;font-size:12px;color:#000;transform:scaleX(0.9250);transform-origin:100% 0;">7.798</div><div class="t" style="left:866.62px;top:258.44px;font-size:12px;color:#000;transform:scaleX(0.9127);transform-origin:100% 0;">106.694</div><div class="t" style="left:1083.30px;top:258.44px;font-size:12px;color:#000;transform:scaleX(0.9177);transform-origin:100% 0;">88.735</div><div class="t" style="left:1310.30px;top:258.44px;font-size:12px;color:#000;transform:scaleX(0.9177);transform-origin:100% 0;">30.441</div><div class="t" style="left:1516.51px;top:258.44px;font-size:12px;color:#000;transform:scaleX(0.9132);transform-origin:100% 0;">114.244</div><div class="t" style="left:1738.97px;top:258.44px;font-size:12px;color:#000;transform:scaleX(0.9250);transform-origin:100% 0;">0.000</div><div style="left:11px;top:276px;width:52px;height:24px;background:#fff"></div><div style="left:11px;top:277px;width:51px;height:22px;background:#f0f0f0"></div><div style="left:10px;top:300px;width:53px;height:1px;background:#6d6d6d"></div><div class="t" style="left:16.48px;top:282.10px;font-size:12.4px;font-weight:bold;color:#000;transform:scaleX(0.9485);transform-origin:50% 0;">Delta E</div><div style="left:64px;top:276px;width:1706px;height:24px;background:#b0ffb0"></div><div style="left:64px;top:300px;width:1706px;height:1px;background:#c4c4c4"></div><div class="t" style="left:254.62px;top:283.22px;font-size:12.5px;font-weight:bold;color:#000;transform:scaleX(0.9441);transform-origin:100% 0;">1.8</div><div class="t" style="left:467.62px;top:283.22px;font-size:12.5px;font-weight:bold;color:#000;transform:scaleX(0.9441);transform-origin:100% 0;">1.5</div><div class="t" style="left:677.62px;top:283.22px;font-size:12.5px;font-weight:bold;color:#000;transform:scaleX(0.9441);transform-origin:100% 0;">1.0</div><div class="t" style="left:891.62px;top:283.22px;font-size:12.5px;font-weight:bold;color:#000;transform:scaleX(0.9441);transform-origin:100% 0;">1.4</div><div class="t" style="left:1101.62px;top:283.22px;font-size:12.5px;font-weight:bold;color:#000;transform:scaleX(0.9441);transform-origin:100% 0;">1.0</div><div class="t" style="left:1328.62px;top:283.22px;font-size:12.5px;font-weight:bold;color:#000;transform:scaleX(0.9441);transform-origin:100% 0;">1.6</div><div class="t" style="left:1540.62px;top:283.22px;font-size:12.5px;font-weight:bold;color:#000;transform:scaleX(0.9441);transform-origin:100% 0;">0.1</div><div style="left:1561px;top:276px;width:209px;height:24px;background:#e0e0e0"></div><div style="left:11px;top:301px;width:52px;height:24px;background:#fff"></div><div style="left:11px;top:302px;width:51px;height:22px;background:#f0f0f0"></div><div style="left:10px;top:325px;width:53px;height:1px;background:#6d6d6d"></div><div class="t" style="left:14.41px;top:307.10px;font-size:12.4px;font-weight:bold;color:#000;transform:scaleX(0.9460);transform-origin:50% 0;">delta xy</div><div style="left:64px;top:301px;width:1706px;height:24px;background:#f0f0f0"></div><div style="left:64px;top:325px;width:1706px;height:1px;background:#c4c4c4"></div><div class="t" style="left:236.30px;top:308.44px;font-size:12px;color:#000;transform:scaleX(0.9177);transform-origin:100% 0;">0.0142</div><div class="t" style="left:450.19px;top:308.44px;font-size:12px;color:#000;transform:scaleX(0.9185);transform-origin:100% 0;">0.0211</div><div class="t" style="left:659.30px;top:308.44px;font-size:12px;color:#000;transform:scaleX(0.9177);transform-origin:100% 0;">0.0042</div><div class="t" style="left:873.30px;top:308.44px;font-size:12px;color:#000;transform:scaleX(0.9177);transform-origin:100% 0;">0.0106</div><div class="t" style="left:1083.30px;top:308.44px;font-size:12px;color:#000;transform:scaleX(0.9177);transform-origin:100% 0;">0.0060</div><div class="t" style="left:1310.30px;top:308.44px;font-size:12px;color:#000;transform:scaleX(0.9177);transform-origin:100% 0;">0.0061</div><div class="t" style="left:1522.30px;top:308.44px;font-size:12px;color:#000;transform:scaleX(0.9177);transform-origin:100% 0;">0.0003</div><div style="left:11px;top:326px;width:52px;height:24px;background:#fff"></div><div style="left:11px;top:327px;width:51px;height:22px;background:#f0f0f0"></div><div style="left:10px;top:350px;width:53px;height:1px;background:#6d6d6d"></div><div class="t" style="left:17.52px;top:332.10px;font-size:12.4px;font-weight:bold;color:#000;transform:scaleX(0.9500);transform-origin:50% 0;">delta L</div><div style="left:64px;top:326px;width:1706px;height:24px;background:#e0e0e0"></div><div style="left:64px;top:350px;width:1706px;height:1px;background:#c4c4c4"></div><div class="t" style="left:238.32px;top:333.44px;font-size:12px;color:#000;transform:scaleX(0.9196);transform-origin:100% 0;">-7.5 %</div><div class="t" style="left:448.31px;top:333.44px;font-size:12px;color:#000;transform:scaleX(0.9168);transform-origin:100% 0;">+1.3 %</div><div class="t" style="left:661.32px;top:333.44px;font-size:12px;color:#000;transform:scaleX(0.9196);transform-origin:100% 0;">-5.4 %</div><div class="t" style="left:872.31px;top:333.44px;font-size:12px;color:#000;transform:scaleX(0.9168);transform-origin:100% 0;">+0.7 %</div><div class="t" style="left:1085.32px;top:333.44px;font-size:12px;color:#000;transform:scaleX(0.9196);transform-origin:100% 0;">-1.3 %</div><div class="t" style="left:1312.32px;top:333.44px;font-size:12px;color:#000;transform:scaleX(0.9196);transform-origin:100% 0;">-6.5 %</div><div style="left:63px;top:177px;width:1px;height:179px;background:#6d6d6d"></div><div style="left:274px;top:201px;width:1px;height:155px;background:#c4c4c4"></div><div style="left:487px;top:201px;width:1px;height:155px;background:#c4c4c4"></div><div style="left:697px;top:201px;width:1px;height:155px;background:#c4c4c4"></div><div style="left:911px;top:201px;width:1px;height:155px;background:#c4c4c4"></div><div style="left:1121px;top:201px;width:1px;height:155px;background:#c4c4c4"></div><div style="left:1348px;top:201px;width:1px;height:155px;background:#c4c4c4"></div><div style="left:1560px;top:201px;width:1px;height:155px;background:#c4c4c4"></div><div style="left:1770px;top:201px;width:1px;height:155px;background:#c4c4c4"></div><div style="left:11px;top:351px;width:52px;height:5px;background:#fff"></div><div style="left:11px;top:352px;width:51px;height:4px;background:#f0f0f0"></div><div style="left:64px;top:351px;width:1706px;height:5px;background:#f0f0f0"></div><div style="left:1770px;top:177px;width:1px;height:179px;background:#6d6d6d"></div><div style="left:1771px;top:177px;width:18px;height:179px;background:#f0f0f0"></div><div style="left:1789px;top:177px;width:1px;height:196px;background:#fff"></div><div style="left:1779px;top:195px;width:2px;height:141px;background:#808080"></div><div style="left:10px;top:356px;width:1780px;height:17px;background:#f0f0f0;border-top:1px solid #fff"></div><svg style="position:absolute;left:14px;top:359px;overflow:visible" width="8" height="10" viewBox="0 0 8 10"><path d="M7 0 L0 5 L7 10 Z" fill="#a0a0a0"/></svg><svg style="position:absolute;left:1760px;top:359px;overflow:visible" width="8" height="10" viewBox="0 0 8 10"><path d="M0 0 L7 5 L0 10 Z" fill="#a0a0a0"/></svg><div style="left:10px;top:372px;width:1780px;height:1px;background:#fff"></div><div style="left:1808px;top:159px;width:2px;height:220px;background:#fff"></div><div style="left:1810px;top:156px;width:2px;height:223px;background:#777"></div><div style="left:1812px;top:156px;width:84px;height:228px;background:#8a8a8a"></div><div style="left:1814px;top:160px;width:82px;height:102px;background:#fff"></div><div style="left:1815px;top:161px;width:80px;height:100px;background:#6d6d6d"></div><div style="left:1816px;top:162px;width:78px;height:18px;background:linear-gradient(#eaf0f9,#e3eaf4);border-radius:6px 6px 0 0"></div><div style="left:1816px;top:180px;width:78px;height:1px;background:#8e8e8e"></div><div style="left:1816px;top:181px;width:78px;height:78px;background:#ebebeb"></div><div class="t" style="left:1821.60px;top:167.99px;font-size:11px;font-weight:bold;color:#3a3a3a;transform:scaleX(1.2190);transform-origin:0 0;">Display</div><div style="left:1821px;top:181px;width:68px;height:15px;background:#f0f0f0"></div><svg style="position:absolute;left:1823px;top:181px;overflow:visible" width="12" height="12" viewBox="0 0 12 12"><circle cx="6" cy="6" r="5" fill="#fff" stroke="#e0e0e0" stroke-width="1"/><path d="M1.6 8.4 A5 5 0 0 1 8.4 1.6" fill="none" stroke="#c8c8c8" stroke-width="1.5"/></svg><div class="t" style="left:1840.10px;top:183.22px;font-size:12.5px;color:#b0b0b0;">Sensor</div><div style="left:1821px;top:197px;width:68px;height:15px;background:#f0f0f0"></div><svg style="position:absolute;left:1823px;top:197px;overflow:visible" width="12" height="12" viewBox="0 0 12 12"><circle cx="6" cy="6" r="5" fill="#fff" stroke="#e0e0e0" stroke-width="1"/><path d="M1.6 8.4 A5 5 0 0 1 8.4 1.6" fill="none" stroke="#606060" stroke-width="1.5"/></svg><div class="t" style="left:1840.10px;top:199.22px;font-size:12.5px;color:#000;">RGB</div><div style="left:1821px;top:213px;width:68px;height:15px;background:#f0f0f0"></div><svg style="position:absolute;left:1823px;top:213px;overflow:visible" width="12" height="12" viewBox="0 0 12 12"><circle cx="6" cy="6" r="5" fill="#fff" stroke="#e0e0e0" stroke-width="1"/><path d="M1.6 8.4 A5 5 0 0 1 8.4 1.6" fill="none" stroke="#606060" stroke-width="1.5"/></svg><div class="t" style="left:1840.10px;top:215.22px;font-size:12.5px;color:#000;">XYZ</div><div style="left:1821px;top:229px;width:68px;height:15px;background:#f0f0f0"></div><svg style="position:absolute;left:1823px;top:229px;overflow:visible" width="12" height="12" viewBox="0 0 12 12"><circle cx="6" cy="6" r="5" fill="#fff" stroke="#e0e0e0" stroke-width="1"/><path d="M1.6 8.4 A5 5 0 0 1 8.4 1.6" fill="none" stroke="#606060" stroke-width="1.5"/></svg><div class="t" style="left:1840.10px;top:231.22px;font-size:12.5px;color:#000;">xyz</div><div style="left:1821px;top:244px;width:68px;height:15px;background:#f0f0f0"></div><svg style="position:absolute;left:1823px;top:244px;overflow:visible" width="12" height="12" viewBox="0 0 12 12"><circle cx="6" cy="6" r="5" fill="#fff" stroke="#e0e0e0" stroke-width="1"/><path d="M1.6 8.4 A5 5 0 0 1 8.4 1.6" fill="none" stroke="#606060" stroke-width="1.5"/><circle cx="6" cy="6" r="2" fill="#000"/></svg><div class="t" style="left:1840.10px;top:246.22px;font-size:12.5px;color:#000;">xyY</div><div style="left:1813px;top:264px;width:83px;height:30px;background:#fff"></div><div style="left:1814px;top:265px;width:81px;height:28px;background:#e8e8e8;border-right:1px solid #a0a0a0;border-bottom:1px solid #a0a0a0"></div><div style="left:1813px;top:294px;width:83px;height:29px;background:#fff"></div><div style="left:1814px;top:295px;width:81px;height:27px;background:#e8e8e8;border-right:1px solid #a0a0a0;border-bottom:1px solid #a0a0a0"></div><div style="left:1813px;top:323px;width:83px;height:31px;background:#fff"></div><div style="left:1814px;top:324px;width:81px;height:29px;background:#e8e8e8;border-right:1px solid #a0a0a0;border-bottom:1px solid #a0a0a0"></div><div class="t" style="left:1860.10px;top:275.22px;font-size:12.5px;color:#000;">Go</div><div class="t" style="left:1849.10px;top:304.22px;font-size:12.5px;color:#000;">Delete</div><div class="t" style="left:1858.10px;top:334.22px;font-size:12.5px;color:#000;">Refs</div><svg style="position:absolute;left:1817px;top:268px;overflow:visible" width="24" height="27" viewBox="0 0 24 27"><radialGradient id="b21895" cx="0.35" cy="0.3" r="0.75"><stop offset="0" stop-color="#fff"/><stop offset="0.25" stop-color="#f0e020"/><stop offset="1" stop-color="#a09000"/></radialGradient><circle cx="15" cy="5" r="3.5" fill="url(#b21895)"/><radialGradient id="b51085" cx="0.35" cy="0.3" r="0.75"><stop offset="0" stop-color="#fff"/><stop offset="0.25" stop-color="#c060f0"/><stop offset="1" stop-color="#6020a0"/></radialGradient><circle cx="19" cy="8" r="4" fill="url(#b51085)"/><radialGradient id="b82794" cx="0.35" cy="0.3" r="0.75"><stop offset="0" stop-color="#fff"/><stop offset="0.25" stop-color="#e02020"/><stop offset="1" stop-color="#700000"/></radialGradient><circle cx="5" cy="21" r="6" fill="url(#b82794)"/><radialGradient id="b63027" cx="0.35" cy="0.3" r="0.75"><stop offset="0" stop-color="#fff"/><stop offset="0.25" stop-color="#2050e0"/><stop offset="1" stop-color="#002080"/></radialGradient><circle cx="11" cy="22" r="6" fill="url(#b63027)"/><radialGradient id="b5511" cx="0.35" cy="0.3" r="0.75"><stop offset="0" stop-color="#fff"/><stop offset="0.25" stop-color="#40d040"/><stop offset="1" stop-color="#006000"/></radialGradient><circle cx="16" cy="17" r="5" fill="url(#b5511)"/><radialGradient id="b32637" cx="0.35" cy="0.3" r="0.75"><stop offset="0" stop-color="#fff"/><stop offset="0.25" stop-color="#40e0e0"/><stop offset="1" stop-color="#007080"/></radialGradient><circle cx="19" cy="15" r="4" fill="url(#b32637)"/></svg><svg style="position:absolute;left:1819px;top:295px;overflow:visible" width="26" height="26" viewBox="0 0 26 26"><linearGradient id="bin" x1="0" y1="0" x2="1" y2="0"><stop offset="0" stop-color="#e0f4ff"/><stop offset="1" stop-color="#3090d0"/></linearGradient><path d="M1 3 L25 2 L21 25 L6 25 Z" fill="url(#bin)" stroke="#4080b0" stroke-width="0.8"/><path d="M10 12 A5 5 0 0 1 18 10 L19 8 L19 14 L14 13 L16 11 A3 3 0 0 0 12 13 Z M18 16 A5 5 0 0 1 10 18 L9 20 L9 14 L14 15 L12 17 A3 3 0 0 0 16 15 Z" fill="#20b020"/></svg><svg style="position:absolute;left:1817px;top:327px;overflow:visible" width="32" height="24" viewBox="0 0 32 24"><path d="M1 24 L1 14 L3 8 L5 13 L7 6 L9 12 L11 10 L13 18 V24 Z" fill="#3030ff"/><path d="M5 24 V13 L7 9 L9 14 L10 24 Z" fill="#ff00ff"/><path d="M9 24 V14 L11 10 L13 17 V24 Z" fill="#00c0ff"/><path d="M12 24 V10 L14 3 L16 8 L18 2 L20 9 V24 Z" fill="#00d000"/><path d="M15 24 V8 L18 2 L21 8 L22 24 Z" fill="#ffff00"/><path d="M21 24 V7 L23 9 L25 14 L27 18 V24 Z" fill="#a00000"/><path d="M25 24 V14 L28 16 L31 17 V24 Z" fill="#ff0000"/></svg><div style="left:1818px;top:358px;width:57px;height:19px;background:#f0f0f0"></div><div style="left:1819px;top:361px;width:12px;height:12px;background:#fff;border-left:2px solid #5a5a5a;border-top:2px solid #5a5a5a;border-right:1px solid #e0e0e0;border-bottom:1px solid #e0e0e0"></div><div class="t" style="left:1836.10px;top:362.22px;font-size:12.5px;color:#000;transform:scaleX(1.1699);transform-origin:0 0;">Edit</div><div style="left:2px;top:377px;width:1808px;height:2px;background:#f4f4f4"></div><div style="left:2px;top:379px;width:1810px;height:3px;background:#6d6d6d"></div><div style="left:2px;top:382px;width:1894px;height:2px;background:#8a8a8a"></div><div style="left:5px;top:384px;width:1891px;height:4px;background:#fff"></div><div style="left:5px;top:387px;width:378px;height:633px;background:#6d6d6d"></div><div style="left:6px;top:388px;width:376px;height:17px;background:linear-gradient(#eaf0f9,#e3eaf4);border-radius:6px 6px 0 0"></div><div style="left:6px;top:405px;width:376px;height:1px;background:#8e8e8e"></div><div style="left:6px;top:406px;width:375px;height:608px;background:#ebebeb"></div><div style="left:381px;top:388px;width:1px;height:630px;background:#a0a0a0"></div><div style="left:382px;top:388px;width:1px;height:630px;background:#fff"></div><div style="left:6px;top:1014px;width:376px;height:1px;background:#a0a0a0"></div><div style="left:6px;top:1015px;width:377px;height:1px;background:#fff"></div><div style="left:6px;top:1016px;width:377px;height:1px;background:#a0a0a0"></div><div style="left:5px;top:1017px;width:380px;height:2px;background:#6d6d6d"></div><div style="left:2px;top:1019px;width:1898px;height:2px;background:#b8b8b8"></div><div class="t" style="left:11.10px;top:392.09px;font-size:11px;font-weight:bold;color:#3a3a3a;transform:scaleX(1.2527);transform-origin:0 0;">Selected color</div><div style="left:18px;top:409px;width:110px;height:15px;background:#efefef"></div><div class="t" style="left:17.30px;top:411.02px;font-size:12.5px;color:#000;transform:scaleX(1.0496);transform-origin:0 0;">RGB Levels</div><div style="left:14px;top:433px;width:200px;height:88px;background:#efefef"></div><svg style="position:absolute;left:14px;top:477px;overflow:visible" width="200" height="1" viewBox="0 0 200 1"><line x1="0" y1="0.5" x2="200" y2="0.5" stroke="#707070" stroke-dasharray="3 3"/></svg><svg style="position:absolute;left:14px;top:505px;overflow:visible" width="200" height="14" viewBox="0 0 200 14"><path d="M0 9 Q25 -1 50 9 Z" fill="#a00000" stroke="#000" stroke-width="1"/><path d="M50 9 Q75 -1 100 9 Z" fill="#008000" stroke="#000" stroke-width="1"/><path d="M100 9 Q125 -1 150 9 Z" fill="#0000b0" stroke="#000" stroke-width="1"/><path d="M150 9 Q175 -1 200 9 Z" fill="#c08000" stroke="#000" stroke-width="1"/><rect x="0" y="8.5" width="200" height="5.5" fill="#000"/></svg><div class="t" style="left:25.00px;top:497.71px;font-size:10.5px;font-weight:bold;font-family:'Liberation Serif';color:#000;transform:scaleX(1.1132);transform-origin:0 0;">0.0%</div><div class="t" style="left:76.10px;top:497.71px;font-size:10.5px;font-weight:bold;font-family:'Liberation Serif';color:#000;transform:scaleX(1.1090);transform-origin:0 0;">0.0%</div><div class="t" style="left:127.10px;top:497.71px;font-size:10.5px;font-weight:bold;font-family:'Liberation Serif';color:#000;transform:scaleX(1.1090);transform-origin:0 0;">0.0%</div><div class="t" style="left:174.70px;top:497.71px;font-size:10.5px;font-weight:bold;font-family:'Liberation Serif';color:#000;transform:scaleX(1.1961);transform-origin:0 0;">dE 0.0</div><div style="left:16px;top:533px;width:192px;height:72px;background:#efefef"></div><div class="t" style="left:34.80px;top:536.14px;font-size:12px;font-weight:bold;color:#000;transform:scaleX(1.1727);transform-origin:0 0;">Measure</div><div class="t" style="left:126.10px;top:536.14px;font-size:12px;font-weight:bold;color:#000;transform:scaleX(1.1493);transform-origin:0 0;">Reference</div><div style="left:18px;top:623px;width:41px;height:15px;background:#efefef"></div><div class="t" style="left:17.30px;top:624.22px;font-size:12.5px;color:#000;transform:scaleX(1.1801);transform-origin:0 0;">Target</div><div style="left:50px;top:638px;width:116px;height:89px;border:1px solid #000;border-bottom:none;overflow:hidden"><div style="left:0;top:0;width:114px;height:114px;background:conic-gradient(from 0deg at 50% 50%,#40ff00 0deg,#a8e400 22deg,#ffc000 45deg,#ff5800 67deg,#ff0000 90deg,#ff0040 112deg,#ff0090 135deg,#c000a8 157deg,#8400c8 180deg,#4000e8 202deg,#0000ff 225deg,#0058d0 247deg,#008c9c 270deg,#00b8a0 292deg,#00ff80 315deg,#00ff40 337deg,#40ff00 360deg);transform:scaleY(0.76316);transform-origin:0 0"></div></div><div style="left:67px;top:652px;width:82px;height:62px;background:#000;border:1px solid #fff;border-radius:8px"></div><svg style="position:absolute;left:50px;top:638px" width="116" height="89"><ellipse cx="58" cy="44" rx="21" ry="15" fill="none" stroke="#fff" stroke-width="1" stroke-dasharray="3 2"/><line x1="15" y1="44.5" x2="102" y2="44.5" stroke="#fff" stroke-width="1" stroke-dasharray="3 2"/><line x1="58.5" y1="14" x2="58.5" y2="76" stroke="#fff" stroke-width="1" stroke-dasharray="3 2"/></svg><div style="left:241px;top:406px;width:110px;height:17px;background:#efefef"></div><div class="t" style="left:240.60px;top:409.22px;font-size:12.5px;color:#000;transform:scaleX(1.1344);transform-origin:0 0;">Current Measure</div><div style="left:220px;top:431px;width:1px;height:577px;background:#6d6d6d"></div><div style="left:220px;top:431px;width:154px;height:1px;background:#6d6d6d"></div><div style="left:221px;top:432px;width:152px;height:576px;background:#f0f0f0"></div><div style="left:222px;top:432px;width:55px;height:22px;background:#fff"></div><div style="left:223px;top:433px;width:53px;height:21px;background:#f0f0f0"></div><div style="left:222px;top:454px;width:55px;height:1px;background:#6d6d6d"></div><div style="left:278px;top:432px;width:76px;height:22px;background:#ffffff"></div><div style="left:278px;top:454px;width:76px;height:1px;background:#c8c8c8"></div><div class="t" style="left:227.22px;top:438.50px;font-size:12.4px;font-weight:bold;color:#000;transform:scaleX(0.9918);transform-origin:50% 0;">Y cd/m²</div><div style="left:222px;top:455px;width:55px;height:22px;background:#fff"></div><div style="left:223px;top:456px;width:53px;height:21px;background:#f0f0f0"></div><div style="left:222px;top:477px;width:55px;height:1px;background:#6d6d6d"></div><div style="left:278px;top:455px;width:76px;height:22px;background:#ffffff"></div><div style="left:278px;top:477px;width:76px;height:1px;background:#c8c8c8"></div><div class="t" style="left:235.84px;top:461.50px;font-size:12.4px;font-weight:bold;color:#000;transform:scaleX(0.9639);transform-origin:50% 0;">Y ftL</div><div style="left:222px;top:478px;width:55px;height:22px;background:#fff"></div><div style="left:223px;top:479px;width:53px;height:21px;background:#f0f0f0"></div><div style="left:222px;top:500px;width:55px;height:1px;background:#6d6d6d"></div><div style="left:278px;top:478px;width:76px;height:22px;background:#ffffff"></div><div style="left:278px;top:500px;width:76px;height:1px;background:#c8c8c8"></div><div class="t" style="left:243.23px;top:484.50px;font-size:12.4px;font-weight:bold;color:#000;transform:scaleX(1.0157);transform-origin:50% 0;">T°</div><div style="left:222px;top:501px;width:55px;height:22px;background:#fff"></div><div style="left:223px;top:502px;width:53px;height:21px;background:#f0f0f0"></div><div style="left:222px;top:523px;width:55px;height:1px;background:#6d6d6d"></div><div style="left:278px;top:501px;width:76px;height:22px;background:#dfdfdf"></div><div style="left:278px;top:523px;width:76px;height:1px;background:#c8c8c8"></div><div class="t" style="left:245.36px;top:507.50px;font-size:12.4px;font-weight:bold;color:#000;transform:scaleX(1.0651);transform-origin:50% 0;">X</div><div style="left:222px;top:524px;width:55px;height:22px;background:#fff"></div><div style="left:223px;top:525px;width:53px;height:21px;background:#f0f0f0"></div><div style="left:222px;top:546px;width:55px;height:1px;background:#6d6d6d"></div><div style="left:278px;top:524px;width:76px;height:22px;background:#dfdfdf"></div><div style="left:278px;top:546px;width:76px;height:1px;background:#c8c8c8"></div><div class="t" style="left:245.36px;top:530.50px;font-size:12.4px;font-weight:bold;color:#000;transform:scaleX(1.0651);transform-origin:50% 0;">Y</div><div style="left:222px;top:547px;width:55px;height:22px;background:#fff"></div><div style="left:223px;top:548px;width:53px;height:21px;background:#f0f0f0"></div><div style="left:222px;top:569px;width:55px;height:1px;background:#6d6d6d"></div><div style="left:278px;top:547px;width:76px;height:22px;background:#dfdfdf"></div><div style="left:278px;top:569px;width:76px;height:1px;background:#c8c8c8"></div><div class="t" style="left:245.71px;top:553.50px;font-size:12.4px;font-weight:bold;color:#000;transform:scaleX(1.0784);transform-origin:50% 0;">Z</div><div style="left:222px;top:570px;width:55px;height:22px;background:#fff"></div><div style="left:223px;top:571px;width:53px;height:21px;background:#f0f0f0"></div><div style="left:222px;top:592px;width:55px;height:1px;background:#6d6d6d"></div><div style="left:278px;top:570px;width:76px;height:22px;background:#ffffff"></div><div style="left:278px;top:592px;width:76px;height:1px;background:#c8c8c8"></div><div class="t" style="left:245.02px;top:576.50px;font-size:12.4px;font-weight:bold;color:#000;transform:scaleX(1.0540);transform-origin:50% 0;">R</div><div style="left:222px;top:593px;width:55px;height:22px;background:#fff"></div><div style="left:223px;top:594px;width:53px;height:21px;background:#f0f0f0"></div><div style="left:222px;top:615px;width:55px;height:1px;background:#6d6d6d"></div><div style="left:278px;top:593px;width:76px;height:22px;background:#ffffff"></div><div style="left:278px;top:615px;width:76px;height:1px;background:#c8c8c8"></div><div class="t" style="left:244.68px;top:599.50px;font-size:12.4px;font-weight:bold;color:#000;transform:scaleX(1.0444);transform-origin:50% 0;">G</div><div style="left:222px;top:616px;width:55px;height:22px;background:#fff"></div><div style="left:223px;top:617px;width:53px;height:21px;background:#f0f0f0"></div><div style="left:222px;top:638px;width:55px;height:1px;background:#6d6d6d"></div><div style="left:278px;top:616px;width:76px;height:22px;background:#ffffff"></div><div style="left:278px;top:638px;width:76px;height:1px;background:#c8c8c8"></div><div class="t" style="left:245.02px;top:622.50px;font-size:12.4px;font-weight:bold;color:#000;transform:scaleX(1.0540);transform-origin:50% 0;">B</div><div style="left:222px;top:639px;width:55px;height:22px;background:#fff"></div><div style="left:223px;top:640px;width:53px;height:21px;background:#f0f0f0"></div><div style="left:222px;top:661px;width:55px;height:1px;background:#6d6d6d"></div><div style="left:278px;top:639px;width:76px;height:22px;background:#dfdfdf"></div><div style="left:278px;top:661px;width:76px;height:1px;background:#c8c8c8"></div><div class="t" style="left:246.05px;top:645.50px;font-size:12.4px;font-weight:bold;color:#000;transform:scaleX(1.0940);transform-origin:50% 0;">x</div><div style="left:222px;top:662px;width:55px;height:22px;background:#fff"></div><div style="left:223px;top:663px;width:53px;height:21px;background:#f0f0f0"></div><div style="left:222px;top:684px;width:55px;height:1px;background:#6d6d6d"></div><div style="left:278px;top:662px;width:76px;height:22px;background:#dfdfdf"></div><div style="left:278px;top:684px;width:76px;height:1px;background:#c8c8c8"></div><div class="t" style="left:246.05px;top:668.50px;font-size:12.4px;font-weight:bold;color:#000;transform:scaleX(1.0940);transform-origin:50% 0;">y</div><div style="left:222px;top:685px;width:55px;height:22px;background:#fff"></div><div style="left:223px;top:686px;width:53px;height:21px;background:#f0f0f0"></div><div style="left:222px;top:707px;width:55px;height:1px;background:#6d6d6d"></div><div style="left:278px;top:685px;width:76px;height:22px;background:#dfdfdf"></div><div style="left:278px;top:707px;width:76px;height:1px;background:#c8c8c8"></div><div class="t" style="left:245.36px;top:691.50px;font-size:12.4px;font-weight:bold;color:#000;transform:scaleX(1.0651);transform-origin:50% 0;">Y</div><div style="left:222px;top:708px;width:55px;height:22px;background:#fff"></div><div style="left:223px;top:709px;width:53px;height:21px;background:#f0f0f0"></div><div style="left:222px;top:730px;width:55px;height:1px;background:#6d6d6d"></div><div style="left:278px;top:708px;width:76px;height:22px;background:#ffffff"></div><div style="left:278px;top:730px;width:76px;height:1px;background:#c8c8c8"></div><div class="t" style="left:246.05px;top:714.50px;font-size:12.4px;font-weight:bold;color:#000;transform:scaleX(1.0940);transform-origin:50% 0;">x</div><div style="left:222px;top:731px;width:55px;height:22px;background:#fff"></div><div style="left:223px;top:732px;width:53px;height:21px;background:#f0f0f0"></div><div style="left:222px;top:753px;width:55px;height:1px;background:#6d6d6d"></div><div style="left:278px;top:731px;width:76px;height:22px;background:#ffffff"></div><div style="left:278px;top:753px;width:76px;height:1px;background:#c8c8c8"></div><div class="t" style="left:246.05px;top:737.50px;font-size:12.4px;font-weight:bold;color:#000;transform:scaleX(1.0940);transform-origin:50% 0;">y</div><div style="left:222px;top:754px;width:55px;height:22px;background:#fff"></div><div style="left:223px;top:755px;width:53px;height:21px;background:#f0f0f0"></div><div style="left:222px;top:776px;width:55px;height:1px;background:#6d6d6d"></div><div style="left:278px;top:754px;width:76px;height:22px;background:#ffffff"></div><div style="left:278px;top:776px;width:76px;height:1px;background:#c8c8c8"></div><div class="t" style="left:246.40px;top:760.50px;font-size:12.4px;font-weight:bold;color:#000;transform:scaleX(1.1135);transform-origin:50% 0;">z</div><div style="left:222px;top:777px;width:55px;height:22px;background:#fff"></div><div style="left:223px;top:778px;width:53px;height:21px;background:#f0f0f0"></div><div style="left:222px;top:799px;width:55px;height:1px;background:#6d6d6d"></div><div style="left:278px;top:777px;width:76px;height:22px;background:#dfdfdf"></div><div style="left:278px;top:799px;width:76px;height:1px;background:#c8c8c8"></div><div class="t" style="left:245.71px;top:783.50px;font-size:12.4px;font-weight:bold;color:#000;transform:scaleX(1.0784);transform-origin:50% 0;">L</div><div style="left:222px;top:800px;width:55px;height:22px;background:#fff"></div><div style="left:223px;top:801px;width:53px;height:21px;background:#f0f0f0"></div><div style="left:222px;top:822px;width:55px;height:1px;background:#6d6d6d"></div><div style="left:278px;top:800px;width:76px;height:22px;background:#dfdfdf"></div><div style="left:278px;top:822px;width:76px;height:1px;background:#c8c8c8"></div><div class="t" style="left:246.05px;top:806.50px;font-size:12.4px;font-weight:bold;color:#000;transform:scaleX(1.0940);transform-origin:50% 0;">a</div><div style="left:222px;top:823px;width:55px;height:22px;background:#fff"></div><div style="left:223px;top:824px;width:53px;height:21px;background:#f0f0f0"></div><div style="left:222px;top:845px;width:55px;height:1px;background:#6d6d6d"></div><div style="left:278px;top:823px;width:76px;height:22px;background:#dfdfdf"></div><div style="left:278px;top:845px;width:76px;height:1px;background:#c8c8c8"></div><div class="t" style="left:245.71px;top:829.50px;font-size:12.4px;font-weight:bold;color:#000;transform:scaleX(1.0784);transform-origin:50% 0;">b</div><div style="left:222px;top:846px;width:55px;height:22px;background:#fff"></div><div style="left:223px;top:847px;width:53px;height:21px;background:#f0f0f0"></div><div style="left:222px;top:868px;width:55px;height:1px;background:#6d6d6d"></div><div style="left:278px;top:846px;width:76px;height:22px;background:#ffffff"></div><div style="left:278px;top:868px;width:76px;height:1px;background:#c8c8c8"></div><div class="t" style="left:245.71px;top:852.50px;font-size:12.4px;font-weight:bold;color:#000;transform:scaleX(1.0784);transform-origin:50% 0;">L</div><div style="left:222px;top:869px;width:55px;height:22px;background:#fff"></div><div style="left:223px;top:870px;width:53px;height:21px;background:#f0f0f0"></div><div style="left:222px;top:891px;width:55px;height:1px;background:#6d6d6d"></div><div style="left:278px;top:869px;width:76px;height:22px;background:#ffffff"></div><div style="left:278px;top:891px;width:76px;height:1px;background:#c8c8c8"></div><div class="t" style="left:245.02px;top:875.50px;font-size:12.4px;font-weight:bold;color:#000;transform:scaleX(1.0540);transform-origin:50% 0;">C</div><div style="left:222px;top:892px;width:55px;height:22px;background:#fff"></div><div style="left:223px;top:893px;width:53px;height:21px;background:#f0f0f0"></div><div style="left:222px;top:914px;width:55px;height:1px;background:#6d6d6d"></div><div style="left:278px;top:892px;width:76px;height:22px;background:#ffffff"></div><div style="left:278px;top:914px;width:76px;height:1px;background:#c8c8c8"></div><div class="t" style="left:245.02px;top:898.50px;font-size:12.4px;font-weight:bold;color:#000;transform:scaleX(1.0540);transform-origin:50% 0;">H</div><div style="left:222px;top:915px;width:55px;height:22px;background:#fff"></div><div style="left:223px;top:916px;width:53px;height:21px;background:#f0f0f0"></div><div style="left:222px;top:937px;width:55px;height:1px;background:#6d6d6d"></div><div style="left:278px;top:915px;width:76px;height:22px;background:#dfdfdf"></div><div style="left:278px;top:937px;width:76px;height:1px;background:#c8c8c8"></div><div class="t" style="left:245.71px;top:921.50px;font-size:12.4px;font-weight:bold;color:#000;transform:scaleX(1.0784);transform-origin:50% 0;">L</div><div style="left:222px;top:938px;width:55px;height:22px;background:#fff"></div><div style="left:223px;top:939px;width:53px;height:21px;background:#f0f0f0"></div><div style="left:222px;top:960px;width:55px;height:1px;background:#6d6d6d"></div><div style="left:278px;top:938px;width:76px;height:22px;background:#dfdfdf"></div><div style="left:278px;top:960px;width:76px;height:1px;background:#c8c8c8"></div><div class="t" style="left:244.34px;top:944.50px;font-size:12.4px;font-weight:bold;color:#000;transform:scaleX(1.0362);transform-origin:50% 0;">M</div><div style="left:222px;top:961px;width:55px;height:22px;background:#fff"></div><div style="left:223px;top:962px;width:53px;height:21px;background:#f0f0f0"></div><div style="left:222px;top:983px;width:55px;height:1px;background:#6d6d6d"></div><div style="left:278px;top:961px;width:76px;height:22px;background:#dfdfdf"></div><div style="left:278px;top:983px;width:76px;height:1px;background:#c8c8c8"></div><div class="t" style="left:245.36px;top:967.50px;font-size:12.4px;font-weight:bold;color:#000;transform:scaleX(1.0651);transform-origin:50% 0;">S</div><div style="left:277px;top:432px;width:1px;height:552px;background:#6d6d6d"></div><div style="left:221px;top:984px;width:133px;height:23px;background:#a0a0a0"></div><div style="left:354px;top:432px;width:1px;height:552px;background:#c8c8c8"></div><div style="left:355px;top:432px;width:18px;height:576px;background:#f0f0f0"></div><div style="left:373px;top:432px;width:1px;height:577px;background:#fff"></div><div style="left:221px;top:1007px;width:153px;height:1px;background:#fff"></div><svg style="position:absolute;left:359px;top:437px;overflow:visible" width="10" height="7" viewBox="0 0 10 7"><path d="M0 6 L5 0 L10 6 Z" fill="#a0a0a0"/></svg><svg style="position:absolute;left:359px;top:997px;overflow:visible" width="10" height="7" viewBox="0 0 10 7"><path d="M0 0 L5 6 L10 0 Z" fill="#a0a0a0"/></svg><div style="left:383px;top:384px;width:1px;height:635px;background:#a0a0a0"></div><div style="left:384px;top:382px;width:3px;height:637px;background:#6d6d6d"></div><div style="left:387px;top:384px;width:1px;height:635px;background:#c0c0c0"></div><div style="left:388px;top:384px;width:3px;height:635px;background:#fff"></div><div style="left:391px;top:387px;width:1505px;height:633px;background:#6d6d6d"></div><div style="left:392px;top:388px;width:1501px;height:17px;background:linear-gradient(#eaf0f9,#e3eaf4);border-radius:6px 6px 0 0"></div><div style="left:392px;top:405px;width:1501px;height:1px;background:#8e8e8e"></div><div style="left:392px;top:406px;width:1501px;height:608px;background:#ebebeb"></div><div style="left:1893px;top:388px;width:2px;height:632px;background:#8a8a8a"></div><div style="left:1895px;top:384px;width:1px;height:636px;background:#fff"></div><div style="left:392px;top:1014px;width:1501px;height:1px;background:#a0a0a0"></div><div style="left:392px;top:1015px;width:1501px;height:1px;background:#fff"></div><div style="left:392px;top:1016px;width:1501px;height:1px;background:#a0a0a0"></div><div style="left:391px;top:1017px;width:1505px;height:2px;background:#6d6d6d"></div><div class="t" style="left:397.40px;top:392.09px;font-size:11px;font-weight:bold;color:#3a3a3a;transform:scaleX(1.2960);transform-origin:0 0;">Information</div><div style="left:396px;top:409px;width:302px;height:22px;background:#6d6d6d;border-right:1px solid #fff;border-bottom:1px solid #fff"></div><div style="left:398px;top:411px;width:299px;height:19px;background:#fff"></div><div style="left:399.7px;top:412.5px;width:279.5px;height:16.2px;background:#0078d7"></div><div class="t" style="left:400.80px;top:415.85px;font-size:12.7px;color:#fff;transform:scaleX(1.1246);transform-origin:0 0;">Target - CIE</div><div style="left:680px;top:412px;width:16px;height:18px;background:#f0f0f0;border-left:1px solid #fff;border-top:1px solid #fff;border-right:2px solid #6d6d6d;border-bottom:2px solid #6d6d6d"></div><svg style="position:absolute;left:683px;top:418px;overflow:visible" width="9" height="5" viewBox="0 0 9 5"><path d="M0 0 L8 0 L4 4.5 Z" fill="#000"/></svg><div style="left:398px;top:439px;width:748px;height:571px;border:1px solid #000;border-bottom:none;overflow:hidden"><div style="left:0;top:0;width:746px;height:746px;background:conic-gradient(from 0deg at 50% 50%,#40ff00 0deg,#a8e400 22deg,#ffc000 45deg,#ff5800 67deg,#ff0000 90deg,#ff0040 112deg,#ff0090 135deg,#c000a8 157deg,#8400c8 180deg,#4000e8 202deg,#0000ff 225deg,#0058d0 247deg,#008c9c 270deg,#00b8a0 292deg,#00ff80 315deg,#00ff40 337deg,#40ff00 360deg);transform:scaleY(0.76273);transform-origin:0 0"></div></div><div style="left:511px;top:524px;width:523px;height:400px;background:#000;border:1px solid #fff;border-radius:10px"></div><svg style="position:absolute;left:398px;top:439px" width="748" height="571"><ellipse cx="374" cy="285" rx="148" ry="113.5" fill="none" stroke="#fff" stroke-width="1" stroke-dasharray="3 2"/><line x1="80" y1="285.5" x2="669" y2="285.5" stroke="#fff" stroke-width="1" stroke-dasharray="3 2"/><line x1="374.5" y1="59" x2="374.5" y2="513" stroke="#fff" stroke-width="1" stroke-dasharray="3 2"/></svg><div style="left:2px;top:1021px;width:1898px;height:1px;background:#fff"></div><div style="left:2px;top:1022px;width:1916px;height:20px;background:#f0f0f0"></div><div style="left:0px;top:1019px;width:1px;height:23px;background:#a0a0a0"></div><div style="left:1px;top:1019px;width:1px;height:23px;background:#6d6d6d"></div><div style="left:19px;top:1030px;width:1825px;height:2px;background:#858585"></div><div style="left:1918px;top:1019px;width:2px;height:23px;background:#fff"></div><div style="left:1146px;top:439px;width:748px;height:570px;background:#fff"></div><div style="left:1146px;top:439px;width:746px;height:568px;background:#a0a0a0"></div><div style="left:1148px;top:441px;width:744px;height:566px;background:#fff"></div><div style="left:1148px;top:441px;width:742px;height:564px;background:#6d6d6d"></div><div style="left:1150px;top:443px;width:740px;height:562px;background:#03080a;overflow:hidden"><div style="left:0;top:0;width:740px;height:562px;background:conic-gradient(from 0deg at 318px 349px,#20c838 0deg,#80c800 19deg,#c0c000 42deg,#d08000 66deg,#d05000 78deg,#d00040 93deg,#c80060 106deg,#c000a0 127deg,#8800d8 187deg,#2040f0 217deg,#0078d0 235deg,#00a8c0 258deg,#00c0a8 290deg,#00c880 326deg,#00c858 350deg,#20c838 360deg);clip-path:polygon(192.0px 525.0px,182.0px 519.0px,172.0px 508.0px,163.0px 497.0px,151.0px 478.0px,143.0px 465.0px,127.0px 435.0px,120.0px 417.0px,98.0px 365.0px,92.0px 348.0px,80.0px 309.0px,73.0px 277.0px,69.0px 251.0px,65.6px 213.0px,64.4px 197.0px,64.4px 167.0px,66.0px 139.0px,67.0px 126.0px,69.4px 116.0px,72.0px 104.0px,76.0px 95.0px,80.0px 88.0px,86.0px 81.0px,92.0px 75.0px,103.0px 69.5px,117.0px 64.0px,128.0px 61.4px,143.0px 61.4px,150.0px 62.5px,163.0px 65.0px,170.0px 67.6px,190.0px 75.0px,209.0px 84.0px,227.0px 93.0px,261.0px 113.0px,307.0px 141.0px,335.0px 161.0px,390.0px 195.5px,455.0px 240.0px,472.0px 252.0px,509.0px 276.0px,530.0px 291.0px,554.0px 308.0px,613.0px 349.6px,637.0px 365.0px,656.7px 378.5px,637.0px 385.0px,556.0px 410.3px,530.0px 419.2px,350.0px 475.5px,230.0px 513.0px,202.0px 523.0px)"></div><svg style="position:absolute;left:0;top:0" width="740" height="562"><line x1="62.5" y1="0" x2="62.5" y2="562" stroke="#4a4a4a" stroke-width="1"/><line x1="144.5" y1="0" x2="144.5" y2="562" stroke="#4a4a4a" stroke-width="1"/><line x1="226.5" y1="0" x2="226.5" y2="562" stroke="#4a4a4a" stroke-width="1"/><line x1="308.5" y1="0" x2="308.5" y2="562" stroke="#4a4a4a" stroke-width="1"/><line x1="390.5" y1="0" x2="390.5" y2="562" stroke="#4a4a4a" stroke-width="1"/><line x1="472.5" y1="0" x2="472.5" y2="562" stroke="#4a4a4a" stroke-width="1"/><line x1="554.5" y1="0" x2="554.5" y2="562" stroke="#4a4a4a" stroke-width="1"/><line x1="637.5" y1="0" x2="637.5" y2="562" stroke="#4a4a4a" stroke-width="1"/><line x1="0" y1="476.5" x2="740" y2="476.5" stroke="#4a4a4a" stroke-width="1"/><line x1="0" y1="420.5" x2="740" y2="420.5" stroke="#4a4a4a" stroke-width="1"/><line x1="0" y1="365.5" x2="740" y2="365.5" stroke="#4a4a4a" stroke-width="1"/><line x1="0" y1="309.5" x2="740" y2="309.5" stroke="#4a4a4a" stroke-width="1"/><line x1="0" y1="253.5" x2="740" y2="253.5" stroke="#4a4a4a" stroke-width="1"/><line x1="0" y1="197.5" x2="740" y2="197.5" stroke="#4a4a4a" stroke-width="1"/><line x1="0" y1="141.5" x2="740" y2="141.5" stroke="#4a4a4a" stroke-width="1"/><line x1="0" y1="85.5" x2="740" y2="85.5" stroke="#4a4a4a" stroke-width="1"/><line x1="0" y1="29.5" x2="740" y2="29.5" stroke="#4a4a4a" stroke-width="1"/></svg><div style="left:0;top:0;width:740px;height:562px;background:radial-gradient(ellipse 190px 150px at 318px 349px,#fff 0%,rgba(255,255,255,0.92) 20%,rgba(255,255,255,0.45) 60%,rgba(255,255,255,0) 100%),conic-gradient(from 0deg at 318px 349px,#20ff00 0deg,#b0ff00 25deg,#ffff00 41deg,#ff9000 65deg,#ff1010 90deg,#ff0070 128deg,#ff00e0 172deg,#a000ff 198deg,#2020ff 221deg,#0080ff 245deg,#00e8ff 269deg,#00ff90 318deg,#00ff20 355deg,#20ff00 360deg);clip-path:polygon(305.4px 185.0px,597.8px 351.1px,183.1px 500.8px)"></div><svg style="position:absolute;left:0;top:0" width="740" height="562"><defs><filter id="sh" x="-50%" y="-50%" width="200%" height="200%"><feGaussianBlur in="SourceAlpha" stdDeviation="1.3"/><feOffset dx="1.5" dy="2" result="b"/><feComponentTransfer><feFuncA type="linear" slope="0.6"/></feComponentTransfer><feMerge><feMergeNode/><feMergeNode in="SourceGraphic"/></feMerge></filter><radialGradient id="gG" cx="0.4" cy="0.35" r="0.75"><stop offset="0" stop-color="#30ff30"/><stop offset="1" stop-color="#008800"/></radialGradient><radialGradient id="gY" cx="0.4" cy="0.35" r="0.75"><stop offset="0" stop-color="#ffffb8"/><stop offset="1" stop-color="#c8c860"/></radialGradient><radialGradient id="gR" cx="0.4" cy="0.35" r="0.75"><stop offset="0" stop-color="#ff4a30"/><stop offset="1" stop-color="#b00800"/></radialGradient><radialGradient id="gC" cx="0.4" cy="0.35" r="0.75"><stop offset="0" stop-color="#b8ffff"/><stop offset="1" stop-color="#58c8c8"/></radialGradient><radialGradient id="gM" cx="0.4" cy="0.35" r="0.75"><stop offset="0" stop-color="#ff50ff"/><stop offset="1" stop-color="#b000b0"/></radialGradient><radialGradient id="gB" cx="0.4" cy="0.35" r="0.75"><stop offset="0" stop-color="#5050ff"/><stop offset="1" stop-color="#1010b0"/></radialGradient><radialGradient id="gW" cx="0.4" cy="0.35" r="0.75"><stop offset="0" stop-color="#ffffff"/><stop offset="1" stop-color="#c8c8c8"/></radialGradient><radialGradient id="gL" cx="0.4" cy="0.35" r="0.75"><stop offset="0" stop-color="#e8e8ff"/><stop offset="1" stop-color="#9898c0"/></radialGradient></defs><path d="M192.0 525.0 L182.0 519.0 L172.0 508.0 L163.0 497.0 L151.0 478.0 L143.0 465.0 L127.0 435.0 L120.0 417.0 L98.0 365.0 L92.0 348.0 L80.0 309.0 L73.0 277.0 L69.0 251.0 L65.6 213.0 L64.4 197.0 L64.4 167.0 L66.0 139.0 L67.0 126.0 L69.4 116.0 L72.0 104.0 L76.0 95.0 L80.0 88.0 L86.0 81.0 L92.0 75.0 L103.0 69.5 L117.0 64.0 L128.0 61.4 L143.0 61.4 L150.0 62.5 L163.0 65.0 L170.0 67.6 L190.0 75.0 L209.0 84.0 L227.0 93.0 L261.0 113.0 L307.0 141.0 L335.0 161.0 L390.0 195.5 L455.0 240.0 L472.0 252.0 L509.0 276.0 L530.0 291.0 L554.0 308.0 L613.0 349.6 L637.0 365.0 L656.7 378.5 L637.0 385.0 L556.0 410.3 L530.0 419.2 L350.0 475.5 L230.0 513.0 L202.0 523.0 Z" fill="none" stroke="#f4a800" stroke-width="1.3" stroke-linejoin="round"/><line x1="0" y1="349.5" x2="740" y2="349.5" stroke="#d8d8d8" stroke-width="1" stroke-dasharray="4 3"/><line x1="318.5" y1="0" x2="318.5" y2="562" stroke="#d8d8d8" stroke-width="1" stroke-dasharray="4 3"/><line x1="308.0" y1="196.7" x2="347.2" y2="217.9" stroke="#007000" stroke-width="3"/><line x1="347.2" y1="217.9" x2="509.2" y2="305.4" stroke="#7a7a00" stroke-width="3"/><line x1="509.2" y1="305.4" x2="587.4" y2="347.7" stroke="#a00000" stroke-width="3"/><line x1="587.4" y1="347.7" x2="366.0" y2="430.8" stroke="#a00010" stroke-width="3"/><line x1="366.0" y1="430.8" x2="305.6" y2="453.4" stroke="#a00070" stroke-width="3"/><line x1="305.6" y1="453.4" x2="184.8" y2="498.7" stroke="#1a1a90" stroke-width="3"/><line x1="184.8" y1="498.7" x2="215.6" y2="423.2" stroke="#101090" stroke-width="3"/><line x1="215.6" y1="423.2" x2="236.6" y2="371.9" stroke="#808080" stroke-width="3"/><line x1="236.6" y1="371.9" x2="271.1" y2="287.3" stroke="#108090" stroke-width="3"/><line x1="271.1" y1="287.3" x2="308.0" y2="196.7" stroke="#007000" stroke-width="3"/><path d="M305.4 185.0 L597.8 351.1 L183.1 500.8 Z" fill="none" stroke="#fff" stroke-width="3.2" stroke-linejoin="miter"/><path d="M326.0 349.0 L345.0 335.0 L360.0 327.0 L378.0 318.0 L402.0 309.0 L422.0 303.0 L440.0 300.0 L448.0 298.5" fill="none" stroke="#000" stroke-width="1.2"/><circle cx="376" cy="318" r="3" fill="#fff" stroke="#000" stroke-width="1"/><circle cx="422" cy="303" r="3" fill="#fff" stroke="#000" stroke-width="1"/><circle cx="441" cy="299.5" r="3" fill="#fff" stroke="#000" stroke-width="1"/><circle cx="429" cy="303.5" r="2.8" fill="#00d000"/><text x="397.0" y="298.0" font-family="Liberation Serif" font-size="14" fill="#101010">3000</text><text x="439.0" y="297.0" font-family="Liberation Serif" font-size="14" fill="#101010">27</text><text x="427.0" y="322.0" font-family="Liberation Serif" font-size="13" fill="#101010">A</text><line x1="137.5" y1="61" x2="154.29999999999995" y2="35.69999999999999" stroke="#b8b8c8" stroke-width="0.9"/><text x="0" y="0" transform="translate(154.3,43.7) scale(0.970,1)" font-family="Liberation Serif" font-size="11" fill="#ececec">520 nm</text><line x1="261" y1="113" x2="277" y2="86.5" stroke="#b8b8c8" stroke-width="0.9"/><text x="0" y="0" transform="translate(277.0,94.5) scale(0.970,1)" font-family="Liberation Serif" font-size="11" fill="#ececec">540 nm</text><line x1="374" y1="185" x2="390" y2="160.5" stroke="#b8b8c8" stroke-width="0.9"/><text x="0" y="0" transform="translate(390.0,168.5) scale(0.970,1)" font-family="Liberation Serif" font-size="11" fill="#ececec">560 nm</text><line x1="454" y1="240" x2="470" y2="214.5" stroke="#b8b8c8" stroke-width="0.9"/><text x="0" y="0" transform="translate(470.0,222.5) scale(0.970,1)" font-family="Liberation Serif" font-size="11" fill="#ececec">580 nm</text><line x1="508" y1="276" x2="525" y2="252.5" stroke="#b8b8c8" stroke-width="0.9"/><text x="0" y="0" transform="translate(525.0,260.5) scale(0.970,1)" font-family="Liberation Serif" font-size="11" fill="#ececec">600 nm</text><line x1="563" y1="310" x2="577" y2="287.5" stroke="#b8b8c8" stroke-width="0.9"/><text x="0" y="0" transform="translate(577.0,295.5) scale(0.970,1)" font-family="Liberation Serif" font-size="11" fill="#ececec">620 nm</text><line x1="617" y1="349" x2="633" y2="325.5" stroke="#b8b8c8" stroke-width="0.9"/><text x="0" y="0" transform="translate(633.0,333.5) scale(0.970,1)" font-family="Liberation Serif" font-size="11" fill="#ececec">640 nm</text><line x1="642" y1="365" x2="657" y2="342.5" stroke="#b8b8c8" stroke-width="0.9"/><text x="0" y="0" transform="translate(657.0,350.5) scale(0.970,1)" font-family="Liberation Serif" font-size="11" fill="#ececec">660 nm</text><line x1="655" y1="377" x2="667" y2="349.5" stroke="#b8b8c8" stroke-width="0.9"/><text x="0" y="0" transform="translate(667.0,357.5) scale(0.970,1)" font-family="Liberation Serif" font-size="11" fill="#ececec">680 nm</text><line x1="64.40000000000009" y1="201.39999999999998" x2="48" y2="207" stroke="#b8b8c8" stroke-width="0.9"/><text x="0" y="0" transform="translate(22.0,217.5) scale(0.976,1)" font-family="Liberation Serif" font-size="11" fill="#ececec">500 nm</text><line x1="127" y1="435" x2="112" y2="441" stroke="#b8b8c8" stroke-width="0.9"/><text x="0" y="0" transform="translate(84.4,450.0) scale(0.976,1)" font-family="Liberation Serif" font-size="11" fill="#ececec">480 nm</text><line x1="162.79999999999995" y1="498.1" x2="147.79999999999995" y2="503.70000000000005" stroke="#b8b8c8" stroke-width="0.9"/><text x="0" y="0" transform="translate(121.0,512.6) scale(0.976,1)" font-family="Liberation Serif" font-size="11" fill="#ececec">460 nm</text><line x1="174.4000000000001" y1="512.6" x2="160.20000000000005" y2="518.7" stroke="#b8b8c8" stroke-width="0.9"/><text x="0" y="0" transform="translate(133.3,527.6) scale(0.976,1)" font-family="Liberation Serif" font-size="11" fill="#ececec">440 nm</text><line x1="182.79999999999995" y1="520.3" x2="168.29999999999995" y2="526" stroke="#b8b8c8" stroke-width="0.9"/><text x="0" y="0" transform="translate(141.0,535.3) scale(0.976,1)" font-family="Liberation Serif" font-size="11" fill="#ececec">420 nm</text><text x="2.2" y="471.6" font-family="Liberation Serif" font-size="12.5" fill="#f4f4f4">0.1</text><text x="2.2" y="415.6" font-family="Liberation Serif" font-size="12.5" fill="#f4f4f4">0.2</text><text x="2.2" y="360.6" font-family="Liberation Serif" font-size="12.5" fill="#f4f4f4">0.3</text><text x="2.2" y="304.6" font-family="Liberation Serif" font-size="12.5" fill="#f4f4f4">0.4</text><text x="2.2" y="248.6" font-family="Liberation Serif" font-size="12.5" fill="#f4f4f4">0.5</text><text x="2.2" y="192.6" font-family="Liberation Serif" font-size="12.5" fill="#f4f4f4">0.6</text><text x="2.2" y="136.6" font-family="Liberation Serif" font-size="12.5" fill="#f4f4f4">0.7</text><text x="2.2" y="80.6" font-family="Liberation Serif" font-size="12.5" fill="#f4f4f4">0.8</text><text x="0" y="0" transform="translate(146.0,557.6) scale(0.973,1)" font-family="Liberation Serif" font-size="12.5" fill="#f4f4f4">0.1</text><text x="0" y="0" transform="translate(228.0,557.6) scale(0.973,1)" font-family="Liberation Serif" font-size="12.5" fill="#f4f4f4">0.2</text><text x="0" y="0" transform="translate(310.0,557.6) scale(0.973,1)" font-family="Liberation Serif" font-size="12.5" fill="#f4f4f4">0.3</text><text x="0" y="0" transform="translate(392.0,557.6) scale(0.973,1)" font-family="Liberation Serif" font-size="12.5" fill="#f4f4f4">0.4</text><text x="0" y="0" transform="translate(474.0,557.6) scale(0.973,1)" font-family="Liberation Serif" font-size="12.5" fill="#f4f4f4">0.5</text><text x="0" y="0" transform="translate(556.0,557.6) scale(0.973,1)" font-family="Liberation Serif" font-size="12.5" fill="#f4f4f4">0.6</text><text x="0" y="0" transform="translate(639.0,557.6) scale(0.973,1)" font-family="Liberation Serif" font-size="12.5" fill="#f4f4f4">0.7</text><text x="0" y="0" transform="translate(575.0,501.0) scale(1.034,1)" font-family="Liberation Sans" font-size="15.5" fill="#4a4a4a" font-weight="bold">hcfr.sourceforge.net</text><rect x="267.4" y="323.3" width="14" height="14" fill="rgba(255,255,255,0.12)" stroke="#d09040" stroke-width="1.6"/><rect x="268.9" y="324.8" width="11" height="11" fill="none" stroke="#6a7a6a" stroke-width="0.8"/><rect x="336.5" y="279.0" width="14" height="14" fill="rgba(255,255,255,0.12)" stroke="#d09040" stroke-width="1.6"/><rect x="338.0" y="280.5" width="11" height="11" fill="none" stroke="#6a7a6a" stroke-width="0.8"/><rect x="365.5" y="244.0" width="14" height="14" fill="rgba(255,255,255,0.12)" stroke="#d09040" stroke-width="1.6"/><rect x="367.0" y="245.5" width="11" height="11" fill="none" stroke="#6a7a6a" stroke-width="0.8"/><rect x="425.7" y="260.5" width="14" height="14" fill="rgba(255,255,255,0.12)" stroke="#d09040" stroke-width="1.6"/><rect x="427.2" y="262.0" width="11" height="11" fill="none" stroke="#6a7a6a" stroke-width="0.8"/><rect x="451.3" y="279.6" width="14" height="14" fill="rgba(255,255,255,0.12)" stroke="#d09040" stroke-width="1.6"/><rect x="452.8" y="281.1" width="11" height="11" fill="none" stroke="#6a7a6a" stroke-width="0.8"/><rect x="487.6" y="299.6" width="14" height="14" fill="rgba(255,255,255,0.12)" stroke="#d09040" stroke-width="1.6"/><rect x="489.1" y="301.1" width="11" height="11" fill="none" stroke="#6a7a6a" stroke-width="0.8"/><rect x="448.8" y="351.0" width="14" height="14" fill="rgba(255,255,255,0.12)" stroke="#d09040" stroke-width="1.6"/><rect x="450.3" y="352.5" width="11" height="11" fill="none" stroke="#6a7a6a" stroke-width="0.8"/><rect x="517.6" y="347.0" width="14" height="14" fill="rgba(255,255,255,0.12)" stroke="#d09040" stroke-width="1.6"/><rect x="519.1" y="348.5" width="11" height="11" fill="none" stroke="#6a7a6a" stroke-width="0.8"/><rect x="367.4" y="391.7" width="14" height="14" fill="rgba(255,255,255,0.12)" stroke="#d09040" stroke-width="1.6"/><rect x="368.9" y="393.2" width="11" height="11" fill="none" stroke="#6a7a6a" stroke-width="0.8"/><rect x="289.3" y="409.1" width="14" height="14" fill="rgba(255,255,255,0.12)" stroke="#d09040" stroke-width="1.6"/><rect x="290.8" y="410.6" width="11" height="11" fill="none" stroke="#6a7a6a" stroke-width="0.8"/><rect x="255.4" y="380.1" width="14" height="14" fill="rgba(255,255,255,0.12)" stroke="#d09040" stroke-width="1.6"/><rect x="256.9" y="381.6" width="11" height="11" fill="none" stroke="#6a7a6a" stroke-width="0.8"/><rect x="225.0" y="377.9" width="14" height="14" fill="rgba(255,255,255,0.12)" stroke="#d09040" stroke-width="1.6"/><rect x="226.5" y="379.4" width="11" height="11" fill="none" stroke="#6a7a6a" stroke-width="0.8"/><rect x="270.3" y="388.3" width="14" height="14" fill="rgba(255,255,255,0.12)" stroke="#d09040" stroke-width="1.6"/><rect x="271.8" y="389.8" width="11" height="11" fill="none" stroke="#6a7a6a" stroke-width="0.8"/><rect x="204.7" y="454.3" width="14" height="14" fill="rgba(255,255,255,0.12)" stroke="#d09040" stroke-width="1.6"/><rect x="206.2" y="455.8" width="11" height="11" fill="none" stroke="#6a7a6a" stroke-width="0.8"/><rect x="225.2" y="427.2" width="14" height="14" fill="rgba(255,255,255,0.12)" stroke="#d09040" stroke-width="1.6"/><rect x="226.7" y="428.7" width="11" height="11" fill="none" stroke="#6a7a6a" stroke-width="0.8"/><rect x="304.7" y="242.2" width="14" height="14" fill="rgba(255,255,255,0.12)" stroke="#d09040" stroke-width="1.6"/><rect x="306.2" y="243.7" width="11" height="11" fill="none" stroke="#6a7a6a" stroke-width="0.8"/><rect x="370.1" y="325.1" width="14" height="14" fill="rgba(255,255,255,0.12)" stroke="#d09040" stroke-width="1.6"/><rect x="371.6" y="326.6" width="11" height="11" fill="none" stroke="#6a7a6a" stroke-width="0.8"/><rect x="303.0" y="184.0" width="12" height="12" fill="#40e000" stroke="#d00030" stroke-width="1"/><path d="M303.0 196.0 V184.0 H315.0" fill="none" stroke="#101080" stroke-width="1"/><rect x="305.0" y="199.0" width="12" height="12" fill="#40e000" stroke="#d00030" stroke-width="1"/><path d="M305.0 211.0 V199.0 H317.0" fill="none" stroke="#101080" stroke-width="1"/><rect x="305.0" y="217.0" width="12" height="12" fill="#40e000" stroke="#d00030" stroke-width="1"/><path d="M305.0 229.0 V217.0 H317.0" fill="none" stroke="#101080" stroke-width="1"/><rect x="308.0" y="232.0" width="12" height="12" fill="#40e000" stroke="#d00030" stroke-width="1"/><path d="M308.0 244.0 V232.0 H320.0" fill="none" stroke="#101080" stroke-width="1"/><rect x="311.0" y="262.0" width="12" height="12" fill="#40e000" stroke="#d00030" stroke-width="1"/><path d="M311.0 274.0 V262.0 H323.0" fill="none" stroke="#101080" stroke-width="1"/><rect x="312.0" y="280.0" width="12" height="12" fill="#40e000" stroke="#d00030" stroke-width="1"/><path d="M312.0 292.0 V280.0 H324.0" fill="none" stroke="#101080" stroke-width="1"/><rect x="314.0" y="298.0" width="12" height="12" fill="#40e000" stroke="#d00030" stroke-width="1"/><path d="M314.0 310.0 V298.0 H326.0" fill="none" stroke="#101080" stroke-width="1"/><rect x="316.0" y="314.0" width="12" height="12" fill="#40e000" stroke="#d00030" stroke-width="1"/><path d="M316.0 326.0 V314.0 H328.0" fill="none" stroke="#101080" stroke-width="1"/><rect x="315.0" y="332.0" width="12" height="12" fill="#40e000" stroke="#d00030" stroke-width="1"/><path d="M315.0 344.0 V332.0 H327.0" fill="none" stroke="#101080" stroke-width="1"/><rect x="319.0" y="336.0" width="14" height="14" fill="#f0d800" stroke="#d00030" stroke-width="1"/><path d="M319.0 350.0 V336.0 H333.0" fill="none" stroke="#101080" stroke-width="1"/><rect x="329.0" y="325.0" width="14" height="14" fill="#f0d800" stroke="#d00030" stroke-width="1"/><path d="M329.0 339.0 V325.0 H343.0" fill="none" stroke="#101080" stroke-width="1"/><rect x="337.0" y="316.0" width="14" height="14" fill="#f0d800" stroke="#d00030" stroke-width="1"/><path d="M337.0 330.0 V316.0 H351.0" fill="none" stroke="#101080" stroke-width="1"/><rect x="348.0" y="304.0" width="14" height="14" fill="#f0d800" stroke="#d00030" stroke-width="1"/><path d="M348.0 318.0 V304.0 H362.0" fill="none" stroke="#101080" stroke-width="1"/><rect x="358.0" y="292.0" width="14" height="14" fill="#f0d800" stroke="#d00030" stroke-width="1"/><path d="M358.0 306.0 V292.0 H372.0" fill="none" stroke="#101080" stroke-width="1"/><rect x="366.0" y="282.0" width="14" height="14" fill="#f0d800" stroke="#d00030" stroke-width="1"/><path d="M366.0 296.0 V282.0 H380.0" fill="none" stroke="#101080" stroke-width="1"/><rect x="375.0" y="272.0" width="14" height="14" fill="#f0d800" stroke="#d00030" stroke-width="1"/><path d="M375.0 286.0 V272.0 H389.0" fill="none" stroke="#101080" stroke-width="1"/><rect x="384.0" y="262.0" width="14" height="14" fill="#f0d800" stroke="#d00030" stroke-width="1"/><path d="M384.0 276.0 V262.0 H398.0" fill="none" stroke="#101080" stroke-width="1"/><rect x="392.0" y="253.0" width="14" height="14" fill="#f0d800" stroke="#d00030" stroke-width="1"/><path d="M392.0 267.0 V253.0 H406.0" fill="none" stroke="#101080" stroke-width="1"/><rect x="400.0" y="243.0" width="14" height="14" fill="#f0d800" stroke="#d00030" stroke-width="1"/><path d="M400.0 257.0 V243.0 H414.0" fill="none" stroke="#101080" stroke-width="1"/><rect x="343.5" y="341.5" width="13" height="13" fill="#ff0808" stroke="#f00000" stroke-width="1.6"/><path d="M343.5 354.5 V341.5 H356.5" fill="none" stroke="#202090" stroke-width="1.6"/><rect x="370.5" y="341.5" width="13" height="13" fill="#ff0808" stroke="#f00000" stroke-width="1.6"/><path d="M370.5 354.5 V341.5 H383.5" fill="none" stroke="#202090" stroke-width="1.6"/><rect x="398.5" y="341.5" width="13" height="13" fill="#ff0808" stroke="#f00000" stroke-width="1.6"/><path d="M398.5 354.5 V341.5 H411.5" fill="none" stroke="#202090" stroke-width="1.6"/><rect x="426.5" y="340.5" width="13" height="13" fill="#ff0808" stroke="#f00000" stroke-width="1.6"/><path d="M426.5 353.5 V340.5 H439.5" fill="none" stroke="#202090" stroke-width="1.6"/><rect x="458.5" y="339.5" width="13" height="13" fill="#ff0808" stroke="#f00000" stroke-width="1.6"/><path d="M458.5 352.5 V339.5 H471.5" fill="none" stroke="#202090" stroke-width="1.6"/><rect x="489.5" y="341.5" width="13" height="13" fill="#ff0808" stroke="#f00000" stroke-width="1.6"/><path d="M489.5 354.5 V341.5 H502.5" fill="none" stroke="#202090" stroke-width="1.6"/><rect x="519.5" y="343.5" width="13" height="13" fill="#ff0808" stroke="#f00000" stroke-width="1.6"/><path d="M519.5 356.5 V343.5 H532.5" fill="none" stroke="#202090" stroke-width="1.6"/><rect x="544.5" y="342.5" width="13" height="13" fill="#ff0808" stroke="#f00000" stroke-width="1.6"/><path d="M544.5 355.5 V342.5 H557.5" fill="none" stroke="#202090" stroke-width="1.6"/><rect x="568.5" y="342.5" width="13" height="13" fill="#ff0808" stroke="#f00000" stroke-width="1.6"/><path d="M568.5 355.5 V342.5 H581.5" fill="none" stroke="#202090" stroke-width="1.6"/><rect x="594.5" y="342.5" width="13" height="13" fill="#ff0808" stroke="#f00000" stroke-width="1.6"/><path d="M594.5 355.5 V342.5 H607.5" fill="none" stroke="#202090" stroke-width="1.6"/><rect x="232" y="343" width="76" height="14" fill="#70e8f0" stroke="#c00030" stroke-width="1"/><path d="M232 357 V343 H308" fill="none" stroke="#101080" stroke-width="1"/><rect x="317.2" y="359.0" width="12" height="12" fill="#f000f0" stroke="#d00030" stroke-width="1"/><path d="M317.2 371.0 V359.0 H329.2" fill="none" stroke="#101080" stroke-width="1"/><rect x="318.8" y="367.6" width="12" height="12" fill="#f000f0" stroke="#d00030" stroke-width="1"/><path d="M318.8 379.6 V367.6 H330.8" fill="none" stroke="#101080" stroke-width="1"/><rect x="320.4" y="377.0" width="12" height="12" fill="#f000f0" stroke="#d00030" stroke-width="1"/><path d="M320.4 389.0 V377.0 H332.4" fill="none" stroke="#101080" stroke-width="1"/><rect x="322.0" y="386.5" width="12" height="12" fill="#f000f0" stroke="#d00030" stroke-width="1"/><path d="M322.0 398.5 V386.5 H334.0" fill="none" stroke="#101080" stroke-width="1"/><rect x="321.2" y="398.3" width="12" height="12" fill="#f000f0" stroke="#d00030" stroke-width="1"/><path d="M321.2 410.3 V398.3 H333.2" fill="none" stroke="#101080" stroke-width="1"/><rect x="318.8" y="410.1" width="12" height="12" fill="#f000f0" stroke="#d00030" stroke-width="1"/><path d="M318.8 422.1 V410.1 H330.8" fill="none" stroke="#101080" stroke-width="1"/><rect x="321.2" y="419.6" width="12" height="12" fill="#f000f0" stroke="#d00030" stroke-width="1"/><path d="M321.2 431.6 V419.6 H333.2" fill="none" stroke="#101080" stroke-width="1"/><rect x="323.5" y="429.0" width="12" height="12" fill="#f000f0" stroke="#d00030" stroke-width="1"/><path d="M323.5 441.0 V429.0 H335.5" fill="none" stroke="#101080" stroke-width="1"/><rect x="322.0" y="438.5" width="12" height="12" fill="#f000f0" stroke="#d00030" stroke-width="1"/><path d="M322.0 450.5 V438.5 H334.0" fill="none" stroke="#101080" stroke-width="1"/><rect x="323.5" y="447.9" width="12" height="12" fill="#f000f0" stroke="#d00030" stroke-width="1"/><path d="M323.5 459.9 V447.9 H335.5" fill="none" stroke="#101080" stroke-width="1"/><rect x="298.1" y="356.9" width="14" height="14" fill="#3010f0" stroke="#d00030" stroke-width="1.2"/><path d="M298.1 370.9 V356.9 H312.1" fill="none" stroke="#101080" stroke-width="1.2"/><rect x="284.7" y="370.3" width="14" height="14" fill="#3010f0" stroke="#d00030" stroke-width="1.2"/><path d="M284.7 384.3 V370.3 H298.7" fill="none" stroke="#101080" stroke-width="1.2"/><rect x="268.1" y="390.8" width="14" height="14" fill="#3010f0" stroke="#d00030" stroke-width="1.2"/><path d="M268.1 404.8 V390.8 H282.1" fill="none" stroke="#101080" stroke-width="1.2"/><rect x="254.0" y="404.9" width="14" height="14" fill="#3010f0" stroke="#d00030" stroke-width="1.2"/><path d="M254.0 418.9 V404.9 H268.0" fill="none" stroke="#101080" stroke-width="1.2"/><rect x="239.8" y="423.0" width="14" height="14" fill="#3010f0" stroke="#d00030" stroke-width="1.2"/><path d="M239.8 437.0 V423.0 H253.8" fill="none" stroke="#101080" stroke-width="1.2"/><rect x="227.2" y="437.2" width="14" height="14" fill="#3010f0" stroke="#d00030" stroke-width="1.2"/><path d="M227.2 451.2 V437.2 H241.2" fill="none" stroke="#101080" stroke-width="1.2"/><rect x="215.4" y="450.6" width="14" height="14" fill="#3010f0" stroke="#d00030" stroke-width="1.2"/><path d="M215.4 464.6 V450.6 H229.4" fill="none" stroke="#101080" stroke-width="1.2"/><rect x="201.2" y="466.3" width="14" height="14" fill="#3010f0" stroke="#d00030" stroke-width="1.2"/><path d="M201.2 480.3 V466.3 H215.2" fill="none" stroke="#101080" stroke-width="1.2"/><rect x="189.4" y="479.7" width="14" height="14" fill="#3010f0" stroke="#d00030" stroke-width="1.2"/><path d="M189.4 493.7 V479.7 H203.4" fill="none" stroke="#101080" stroke-width="1.2"/><rect x="178.4" y="493.1" width="14" height="14" fill="#3010f0" stroke="#d00030" stroke-width="1.2"/><path d="M178.4 507.1 V493.1 H192.4" fill="none" stroke="#101080" stroke-width="1.2"/><circle cx="347.0" cy="350.0" r="6.2" fill="url(#gR)" stroke="#101010" stroke-width="0.9" filter="url(#sh)"/><circle cx="374.0" cy="350.0" r="6.2" fill="url(#gR)" stroke="#101010" stroke-width="0.9" filter="url(#sh)"/><circle cx="402.0" cy="350.0" r="6.2" fill="url(#gR)" stroke="#101010" stroke-width="0.9" filter="url(#sh)"/><circle cx="430.0" cy="349.0" r="6.2" fill="url(#gR)" stroke="#101010" stroke-width="0.9" filter="url(#sh)"/><circle cx="462.0" cy="348.0" r="6.2" fill="url(#gR)" stroke="#101010" stroke-width="0.9" filter="url(#sh)"/><circle cx="493.0" cy="350.0" r="6.2" fill="url(#gR)" stroke="#101010" stroke-width="0.9" filter="url(#sh)"/><circle cx="523.0" cy="352.0" r="6.2" fill="url(#gR)" stroke="#101010" stroke-width="0.9" filter="url(#sh)"/><circle cx="548.0" cy="351.0" r="6.2" fill="url(#gR)" stroke="#101010" stroke-width="0.9" filter="url(#sh)"/><circle cx="572.0" cy="351.0" r="6.2" fill="url(#gR)" stroke="#101010" stroke-width="0.9" filter="url(#sh)"/><circle cx="598.0" cy="351.0" r="6.2" fill="url(#gR)" stroke="#101010" stroke-width="0.9" filter="url(#sh)"/><circle cx="239.0" cy="350.0" r="6.2" fill="url(#gC)" stroke="#101010" stroke-width="0.9" filter="url(#sh)"/><circle cx="247.0" cy="350.0" r="6.2" fill="url(#gC)" stroke="#101010" stroke-width="0.9" filter="url(#sh)"/><circle cx="255.0" cy="350.0" r="6.2" fill="url(#gC)" stroke="#101010" stroke-width="0.9" filter="url(#sh)"/><circle cx="263.0" cy="350.0" r="6.2" fill="url(#gC)" stroke="#101010" stroke-width="0.9" filter="url(#sh)"/><circle cx="271.0" cy="350.0" r="6.2" fill="url(#gC)" stroke="#101010" stroke-width="0.9" filter="url(#sh)"/><circle cx="279.0" cy="350.0" r="6.2" fill="url(#gC)" stroke="#101010" stroke-width="0.9" filter="url(#sh)"/><circle cx="287.0" cy="350.0" r="6.2" fill="url(#gC)" stroke="#101010" stroke-width="0.9" filter="url(#sh)"/><circle cx="295.0" cy="350.0" r="6.2" fill="url(#gC)" stroke="#101010" stroke-width="0.9" filter="url(#sh)"/><circle cx="303.0" cy="350.0" r="6.2" fill="url(#gC)" stroke="#101010" stroke-width="0.9" filter="url(#sh)"/><circle cx="311.0" cy="350.0" r="6.2" fill="url(#gC)" stroke="#101010" stroke-width="0.9" filter="url(#sh)"/><circle cx="247.0" cy="353.0" r="5.5" fill="url(#gL)" stroke="#101010" stroke-width="0.9" filter="url(#sh)"/><circle cx="317.2" cy="362.0" r="5.7" fill="url(#gM)" stroke="#101010" stroke-width="0.9" filter="url(#sh)"/><circle cx="317.2" cy="362.5" r="1" fill="#000"/><circle cx="318.8" cy="370.6" r="5.7" fill="url(#gM)" stroke="#101010" stroke-width="0.9" filter="url(#sh)"/><circle cx="318.8" cy="371.1" r="1" fill="#000"/><circle cx="320.4" cy="380.0" r="5.7" fill="url(#gM)" stroke="#101010" stroke-width="0.9" filter="url(#sh)"/><circle cx="320.4" cy="380.5" r="1" fill="#000"/><circle cx="322.0" cy="389.5" r="5.7" fill="url(#gM)" stroke="#101010" stroke-width="0.9" filter="url(#sh)"/><circle cx="322.0" cy="390.0" r="1" fill="#000"/><circle cx="321.2" cy="401.3" r="5.7" fill="url(#gM)" stroke="#101010" stroke-width="0.9" filter="url(#sh)"/><circle cx="321.2" cy="401.8" r="1" fill="#000"/><circle cx="318.8" cy="413.1" r="5.7" fill="url(#gM)" stroke="#101010" stroke-width="0.9" filter="url(#sh)"/><circle cx="318.8" cy="413.6" r="1" fill="#000"/><circle cx="321.2" cy="422.6" r="5.7" fill="url(#gM)" stroke="#101010" stroke-width="0.9" filter="url(#sh)"/><circle cx="321.2" cy="423.1" r="1" fill="#000"/><circle cx="323.5" cy="432.0" r="5.7" fill="url(#gM)" stroke="#101010" stroke-width="0.9" filter="url(#sh)"/><circle cx="323.5" cy="432.5" r="1" fill="#000"/><circle cx="322.0" cy="441.5" r="5.7" fill="url(#gM)" stroke="#101010" stroke-width="0.9" filter="url(#sh)"/><circle cx="322.0" cy="442.0" r="1" fill="#000"/><circle cx="323.5" cy="450.9" r="5.7" fill="url(#gM)" stroke="#101010" stroke-width="0.9" filter="url(#sh)"/><circle cx="323.5" cy="451.4" r="1" fill="#000"/><circle cx="303.1" cy="365.9" r="6" fill="url(#gB)" stroke="#101010" stroke-width="0.9" filter="url(#sh)"/><circle cx="289.7" cy="379.3" r="6" fill="url(#gB)" stroke="#101010" stroke-width="0.9" filter="url(#sh)"/><circle cx="273.1" cy="399.8" r="6" fill="url(#gB)" stroke="#101010" stroke-width="0.9" filter="url(#sh)"/><circle cx="259.0" cy="413.9" r="6" fill="url(#gB)" stroke="#101010" stroke-width="0.9" filter="url(#sh)"/><circle cx="244.8" cy="432.0" r="6" fill="url(#gB)" stroke="#101010" stroke-width="0.9" filter="url(#sh)"/><circle cx="232.2" cy="446.2" r="6" fill="url(#gB)" stroke="#101010" stroke-width="0.9" filter="url(#sh)"/><circle cx="220.4" cy="459.6" r="6" fill="url(#gB)" stroke="#101010" stroke-width="0.9" filter="url(#sh)"/><circle cx="206.2" cy="475.3" r="6" fill="url(#gB)" stroke="#101010" stroke-width="0.9" filter="url(#sh)"/><circle cx="194.4" cy="488.7" r="6" fill="url(#gB)" stroke="#101010" stroke-width="0.9" filter="url(#sh)"/><circle cx="183.4" cy="502.1" r="6" fill="url(#gB)" stroke="#101010" stroke-width="0.9" filter="url(#sh)"/><circle cx="305.0" cy="185.0" r="5.7" fill="url(#gG)" stroke="#101010" stroke-width="0.9" filter="url(#sh)"/><circle cx="305.0" cy="185.5" r="1" fill="#000"/><circle cx="307.0" cy="200.0" r="5.7" fill="url(#gG)" stroke="#101010" stroke-width="0.9" filter="url(#sh)"/><circle cx="307.0" cy="200.5" r="1" fill="#000"/><circle cx="307.0" cy="218.0" r="5.7" fill="url(#gG)" stroke="#101010" stroke-width="0.9" filter="url(#sh)"/><circle cx="307.0" cy="218.5" r="1" fill="#000"/><circle cx="310.0" cy="233.0" r="5.7" fill="url(#gG)" stroke="#101010" stroke-width="0.9" filter="url(#sh)"/><circle cx="310.0" cy="233.5" r="1" fill="#000"/><circle cx="313.0" cy="263.0" r="5.7" fill="url(#gG)" stroke="#101010" stroke-width="0.9" filter="url(#sh)"/><circle cx="313.0" cy="263.5" r="1" fill="#000"/><circle cx="314.0" cy="281.0" r="5.7" fill="url(#gG)" stroke="#101010" stroke-width="0.9" filter="url(#sh)"/><circle cx="314.0" cy="281.5" r="1" fill="#000"/><circle cx="316.0" cy="299.0" r="5.7" fill="url(#gG)" stroke="#101010" stroke-width="0.9" filter="url(#sh)"/><circle cx="316.0" cy="299.5" r="1" fill="#000"/><circle cx="318.0" cy="315.0" r="5.7" fill="url(#gG)" stroke="#101010" stroke-width="0.9" filter="url(#sh)"/><circle cx="318.0" cy="315.5" r="1" fill="#000"/><circle cx="317.0" cy="333.0" r="5.7" fill="url(#gG)" stroke="#101010" stroke-width="0.9" filter="url(#sh)"/><circle cx="317.0" cy="333.5" r="1" fill="#000"/><circle cx="329.0" cy="338.0" r="6.2" fill="url(#gY)" stroke="#101010" stroke-width="0.9" filter="url(#sh)"/><circle cx="329.0" cy="338.5" r="1" fill="#000"/><circle cx="339.0" cy="327.0" r="6.2" fill="url(#gY)" stroke="#101010" stroke-width="0.9" filter="url(#sh)"/><circle cx="339.0" cy="327.5" r="1" fill="#000"/><circle cx="347.0" cy="318.0" r="6.2" fill="url(#gY)" stroke="#101010" stroke-width="0.9" filter="url(#sh)"/><circle cx="347.0" cy="318.5" r="1" fill="#000"/><circle cx="358.0" cy="306.0" r="6.2" fill="url(#gY)" stroke="#101010" stroke-width="0.9" filter="url(#sh)"/><circle cx="358.0" cy="306.5" r="1" fill="#000"/><circle cx="368.0" cy="294.0" r="6.2" fill="url(#gY)" stroke="#101010" stroke-width="0.9" filter="url(#sh)"/><circle cx="368.0" cy="294.5" r="1" fill="#000"/><circle cx="376.0" cy="284.0" r="6.2" fill="url(#gY)" stroke="#101010" stroke-width="0.9" filter="url(#sh)"/><circle cx="376.0" cy="284.5" r="1" fill="#000"/><circle cx="385.0" cy="274.0" r="6.2" fill="url(#gY)" stroke="#101010" stroke-width="0.9" filter="url(#sh)"/><circle cx="385.0" cy="274.5" r="1" fill="#000"/><circle cx="394.0" cy="264.0" r="6.2" fill="url(#gY)" stroke="#101010" stroke-width="0.9" filter="url(#sh)"/><circle cx="394.0" cy="264.5" r="1" fill="#000"/><circle cx="402.0" cy="255.0" r="6.2" fill="url(#gY)" stroke="#101010" stroke-width="0.9" filter="url(#sh)"/><circle cx="402.0" cy="255.5" r="1" fill="#000"/><circle cx="410.0" cy="245.0" r="6.2" fill="url(#gY)" stroke="#101010" stroke-width="0.9" filter="url(#sh)"/><circle cx="410.0" cy="245.5" r="1" fill="#000"/><circle cx="273.9" cy="328.1" r="5.2" fill="url(#gW)" stroke="#101010" stroke-width="0.9" filter="url(#sh)"/><circle cx="339.7" cy="281.4" r="5.2" fill="url(#gW)" stroke="#101010" stroke-width="0.9" filter="url(#sh)"/><circle cx="374.4" cy="248.5" r="5.2" fill="url(#gW)" stroke="#101010" stroke-width="0.9" filter="url(#sh)"/><circle cx="436.9" cy="263.3" r="5.2" fill="url(#gW)" stroke="#101010" stroke-width="0.9" filter="url(#sh)"/><circle cx="465.8" cy="286.0" r="5.2" fill="url(#gW)" stroke="#101010" stroke-width="0.9" filter="url(#sh)"/><circle cx="501.0" cy="308.0" r="5.2" fill="url(#gW)" stroke="#101010" stroke-width="0.9" filter="url(#sh)"/><circle cx="452.5" cy="362.0" r="5.2" fill="url(#gW)" stroke="#101010" stroke-width="0.9" filter="url(#sh)"/><circle cx="523.0" cy="355.0" r="5.2" fill="url(#gW)" stroke="#101010" stroke-width="0.9" filter="url(#sh)"/><circle cx="373.9" cy="398.7" r="5.2" fill="url(#gW)" stroke="#101010" stroke-width="0.9" filter="url(#sh)"/><circle cx="288.9" cy="419.4" r="5.2" fill="url(#gW)" stroke="#101010" stroke-width="0.9" filter="url(#sh)"/><circle cx="262.9" cy="388.7" r="5.2" fill="url(#gW)" stroke="#101010" stroke-width="0.9" filter="url(#sh)"/><circle cx="229.0" cy="386.4" r="5.2" fill="url(#gW)" stroke="#101010" stroke-width="0.9" filter="url(#sh)"/><circle cx="277.9" cy="395.8" r="5.2" fill="url(#gW)" stroke="#101010" stroke-width="0.9" filter="url(#sh)"/><circle cx="211.7" cy="463.5" r="5.2" fill="url(#gW)" stroke="#101010" stroke-width="0.9" filter="url(#sh)"/><circle cx="230.6" cy="436.0" r="5.2" fill="url(#gW)" stroke="#101010" stroke-width="0.9" filter="url(#sh)"/><circle cx="310.0" cy="246.4" r="5.2" fill="url(#gW)" stroke="#101010" stroke-width="0.9" filter="url(#sh)"/><circle cx="377.1" cy="332.6" r="5.2" fill="url(#gW)" stroke="#101010" stroke-width="0.9" filter="url(#sh)"/><circle cx="407" cy="328" r="6.2" fill="#202020"/><circle cx="407.0" cy="325.0" r="5.8" fill="url(#gL)" stroke="#101010" stroke-width="0.9" filter="url(#sh)"/><circle cx="318.0" cy="349.0" r="6.5" fill="url(#gW)" stroke="#101010" stroke-width="1.8" filter="url(#sh)"/><circle cx="334.0" cy="345.0" r="5.5" fill="url(#gW)" stroke="#101010" stroke-width="0.9" filter="url(#sh)"/><text x="283.0" y="347.0" font-family="Liberation Serif" font-size="13" fill="#202060">D65</text><text x="268.0" y="363.0" font-family="Liberation Serif" font-size="13" fill="#202060">9300</text></svg></div><div style="left:0px;top:1042px;width:1920px;height:19px;background:#f0f0f0"></div><div style="left:0px;top:1042px;width:1920px;height:1px;background:#000"></div><div style="left:1px;top:1043px;width:52px;height:17px;background:#f0f0f0;border:1px solid #000;border-top:none"></div><div style="left:18px;top:1043px;width:1px;height:17px;background:#000"></div><div style="left:35px;top:1043px;width:1px;height:17px;background:#000"></div><svg style="position:absolute;left:5px;top:1047px;overflow:visible" width="9" height="9" viewBox="0 0 9 9"><path d="M0.5 0.5 L8.5 8.5 M8.5 0.5 L0.5 8.5" stroke="#000" stroke-width="1.2"/></svg><svg style="position:absolute;left:24px;top:1048px;overflow:visible" width="5" height="8" viewBox="0 0 5 8"><path d="M4.5 0 L0 4 L4.5 8 Z" fill="#000"/></svg><svg style="position:absolute;left:41px;top:1048px;overflow:visible" width="5" height="8" viewBox="0 0 5 8"><path d="M0 0 L4.5 4 L0 8 Z" fill="#000"/></svg><svg style="position:absolute;left:0;top:1042px" width="400" height="19"><path d="M56 0 L62 18 H120 L126 0 Z" fill="#fff"/><path d="M56 0.5 L62 18.5 H120 L126 0.5" fill="none" stroke="#000" stroke-width="1"/><path d="M126 0.5 L120 18.5 M123 11 L126 18.5 M197 0.5 L203 18.5 M302 0.5 L308 18.5 M383 0.5 L377 18.5" fill="none" stroke="#000" stroke-width="1"/><path d="M123 18.5 H380" stroke="#a0a0a0"/></svg><div class="t" style="left:65.10px;top:1047.49px;font-size:11px;font-weight:bold;color:#000;transform:scaleX(1.0187);transform-origin:0 0;">Measures</div><div class="t" style="left:134.10px;top:1047.49px;font-size:11px;color:#000;transform:scaleX(0.8529);transform-origin:0 0;">CIE Diagram</div><div class="t" style="left:215.10px;top:1047.49px;font-size:11px;color:#000;transform:scaleX(0.8460);transform-origin:0 0;">Color temperature</div><div class="t" style="left:317.10px;top:1047.49px;font-size:11px;color:#000;transform:scaleX(0.8690);transform-origin:0 0;">RGB Levels</div><svg style="position:absolute;left:1751px;top:1043px;overflow:visible" width="15" height="15" viewBox="0 0 15 15"><path d="M1 1 H13 V9 L11 14 H8 L7 10 L4 14 H2 L1 9 Z" fill="#7a7a10" stroke="#303000" stroke-width="0.8"/><rect x="3" y="2" width="8" height="5" fill="#ff2020"/><path d="M4 4 H9 L8 6" stroke="#fff" stroke-width="1" fill="none"/><circle cx="11" cy="12" r="2" fill="#ffff00"/></svg><div style="left:1846px;top:1044px;width:12px;height:13px;background:#fff;border-left:2px solid #5a5a5a;border-top:2px solid #5a5a5a;border-right:1px solid #e8e8e8;border-bottom:1px solid #e8e8e8"></div><div class="t" style="left:1863.10px;top:1046.57px;font-size:11.5px;color:#000;transform:scaleX(0.9649);transform-origin:0 0;">Reference</div><div style="left:0px;top:1061px;width:1920px;height:19px;background:#ecf1f9"></div><div class="t" style="left:2.10px;top:1066.02px;font-size:12.5px;color:#000;transform:scaleX(0.9188);transform-origin:0 0;">Ready</div><div style="left:1743px;top:1062px;width:74px;height:18px;border-left:1px solid #a8b8d0;border-top:1px solid #a8b8d0;background:#eef3fa"></div><div style="left:1820px;top:1062px;width:28px;height:18px;border-left:1px solid #a8b8d0;border-top:1px solid #a8b8d0;background:#eef3fa"></div><div style="left:1851px;top:1062px;width:33px;height:18px;border-left:1px solid #a8b8d0;border-top:1px solid #a8b8d0;background:#eef3fa"></div><div style="left:1887px;top:1062px;width:33px;height:18px;border-left:1px solid #a8b8d0;border-top:1px solid #a8b8d0;background:#eef3fa"></div><div class="t" style="left:1852.10px;top:1065.22px;font-size:12.5px;color:#000;transform:scaleX(1.0257);transform-origin:0 0;">NUM</div></body></html>
